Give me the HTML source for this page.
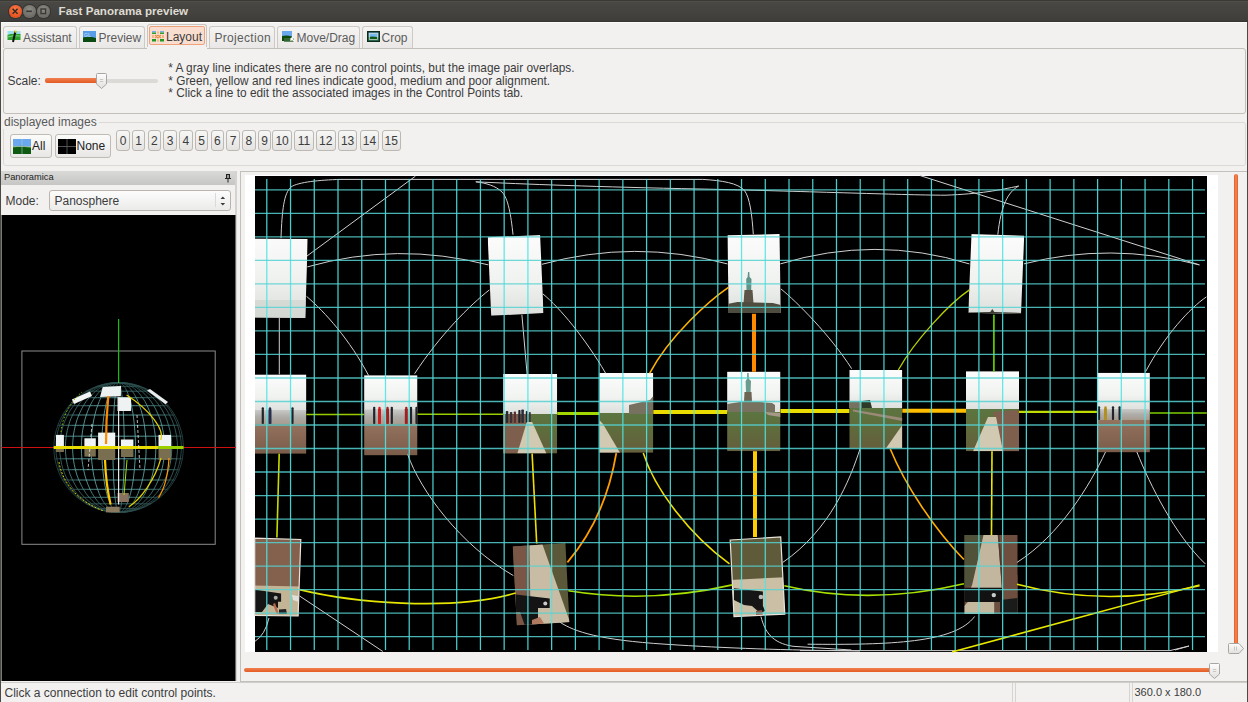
<!DOCTYPE html>
<html><head><meta charset="utf-8">
<style>
*{margin:0;padding:0;box-sizing:border-box}
html,body{width:1248px;height:702px;overflow:hidden;background:#f2f1f0;font-family:"Liberation Sans",sans-serif;font-size:12px;color:#3c3c3c}
.a{position:absolute}
#title{left:0;top:0;width:1248px;height:22px;background:linear-gradient(#55534e 0,#4a4844 6%,#3f3e3a 92%,#32312d 100%);border-top:1px solid #3a3934}
#title .t{left:58.6px;top:2.7px;font-weight:bold;font-size:11.6px;color:#dfdbd2;letter-spacing:0}
.wb{width:12.5px;height:12.5px;border-radius:50%;top:4px}
.tab{top:25.5px;height:22px;border:1px solid #cdcac6;border-bottom:none;border-radius:3px 3px 0 0;background:linear-gradient(#f5f4f3,#e9e8e6)}
.tab span{position:absolute;top:4px;color:#5c5c5c;white-space:nowrap}
.grp{border:1px solid #c9c6c1;border-radius:3px}
.btn{border:1px solid #bfbbb5;border-radius:3px;background:linear-gradient(#fbfbfa,#e8e7e5);}
.nb{top:129.5px;height:21px;border:1px solid #bcb8b2;border-radius:3px;background:linear-gradient(#f7f7f6,#e4e3e1);text-align:center;line-height:19px;padding-top:1.5px;color:#3c3c3c;font-size:12px}
.txt{white-space:nowrap}
</style></head><body>
<!-- window border -->
<div class="a" style="left:0;top:0;width:1px;height:702px;background:#4a4944"></div>
<div class="a" style="left:1247px;top:0;width:1px;height:702px;background:#4a4944"></div>
<div id="title" class="a">
  <div class="a wb" style="left:9px;background:radial-gradient(circle at 50% 35%,#fb7a4a,#e5531f 70%);box-shadow:0 0 0 1px #2e3436"></div>
  <div class="a wb" style="left:23px;background:radial-gradient(circle at 50% 35%,#8d8b85,#6d6b66 70%);box-shadow:0 0 0 1px #34332f"></div>
  <div class="a wb" style="left:37px;background:radial-gradient(circle at 50% 35%,#8d8b85,#6d6b66 70%);box-shadow:0 0 0 1px #34332f"></div>
  <svg class="a" style="left:0;top:-1px" width="60" height="22">
    <path d="M12.6 8.8 L17.6 13.8 M17.6 8.8 L12.6 13.8" stroke="#3b2a22" stroke-width="1.6"/>
    <path d="M26.3 11.3 H31.9" stroke="#3a3935" stroke-width="1.6"/>
    <rect x="41" y="9" width="4.6" height="4.6" fill="none" stroke="#3a3935" stroke-width="1.4"/>
  </svg>
  <div class="a t txt">Fast Panorama preview</div>
</div>
<div class="a" style="left:1px;top:22px;width:1246px;height:1px;background:#fbfbfa"></div>

<!-- tabs -->
<div class="a tab" style="left:3px;width:74px"><span style="left:19px">Assistant</span></div>
<div class="a tab" style="left:78.5px;width:66px"><span style="left:19px">Preview</span></div>
<div class="a tab" style="left:146.5px;top:23.5px;height:25px;width:60.5px;background:#f2f1f0;border-color:#c9c6c1"></div>
<div class="a" style="left:149px;top:26.3px;width:55.5px;height:19.2px;border:1px solid #f0a27c;border-radius:2px;background:#f9ded0"></div>
<div class="a txt" style="left:166px;top:29.5px;color:#3c3c3c">Layout</div>
<div class="a tab" style="left:208.5px;width:66px"><span style="left:5px;letter-spacing:0.3px">Projection</span></div>
<div class="a tab" style="left:276.5px;width:83px"><span style="left:19px">Move/Drag</span></div>
<div class="a tab" style="left:361.5px;width:51px"><span style="left:19px">Crop</span></div>

<!-- options group -->
<div class="a grp" style="left:2.5px;top:47.5px;width:1243px;height:66px;border-color:#c3c0bb"></div>
<div class="a" style="left:146.5px;top:47px;width:60.5px;height:2px;background:#f2f1f0"></div>
<div class="a txt" style="left:7.5px;top:74px">Scale:</div>
<div class="a txt" style="left:168.3px;top:62px;line-height:12.7px;font-size:11.85px;color:#3c3c3c">* A gray line indicates there are no control points, but the image pair overlaps.<br>* Green, yellow and red lines indicate good, medium and poor alignment.<br>* Click a line to edit the associated images in the Control Points tab.</div>

<!-- displayed images group -->
<div class="a grp" style="left:2.5px;top:122px;width:1243px;height:43.5px;border-color:#dcd9d5"></div>
<div class="a txt" style="left:2px;top:115px;padding:0 2px;background:#f2f1f0;color:#5a5a5a">displayed images</div>
<div class="a btn" style="left:9.5px;top:133.5px;width:42px;height:24.5px"></div>
<div class="a txt" style="left:32px;top:138.5px;color:#222">All</div>
<div class="a btn" style="left:54.5px;top:133.5px;width:56px;height:24.5px"></div>
<div class="a txt" style="left:76.5px;top:138.5px;color:#222">None</div>

<div class="a nb" style="left:116.2px;width:13.6px">0</div>
<div class="a nb" style="left:131.9px;width:13.6px">1</div>
<div class="a nb" style="left:147.6px;width:13.6px">2</div>
<div class="a nb" style="left:163.4px;width:13.6px">3</div>
<div class="a nb" style="left:179.1px;width:13.6px">4</div>
<div class="a nb" style="left:194.8px;width:13.6px">5</div>
<div class="a nb" style="left:210.5px;width:13.6px">6</div>
<div class="a nb" style="left:226.2px;width:13.6px">7</div>
<div class="a nb" style="left:242.0px;width:13.6px">8</div>
<div class="a nb" style="left:257.7px;width:13.6px">9</div>
<div class="a nb" style="left:272.3px;width:19.6px">10</div>
<div class="a nb" style="left:294.1px;width:19.6px">11</div>
<div class="a nb" style="left:316.0px;width:19.6px">12</div>
<div class="a nb" style="left:337.8px;width:19.6px">13</div>
<div class="a nb" style="left:359.7px;width:19.6px">14</div>
<div class="a nb" style="left:381.5px;width:19.6px">15</div>
<!-- icons -->
<svg class="a" style="left:7px;top:30px" width="14" height="13" viewBox="0 0 14 13">
 <rect x="0.5" y="1" width="13" height="4" fill="#9fe0f0"/><path d="M0.5 5 Q4 3 13.5 4 V10 H0.5Z" fill="#2ca02c"/><path d="M0.5 7 Q6 5 13.5 6" stroke="#7fd87f" stroke-width="1" fill="none"/>
 <path d="M8.5 1 L6 12" stroke="#111" stroke-width="2"/><circle cx="8.6" cy="1.6" r="1.2" fill="#e8d020"/>
</svg>
<svg class="a" style="left:83px;top:31px" width="13" height="11" viewBox="0 0 13 11">
 <rect width="13" height="11" fill="#5a9de8"/><path d="M0 6.5 Q6 5 13 7 V11 H0Z" fill="#0b4a12"/><text x="1" y="5.5" font-size="5" fill="#cfe3ff" font-family="Liberation Sans">GL</text>
</svg>
<svg class="a" style="left:151.5px;top:30.5px" width="12" height="11" viewBox="0 0 12 11">
 <rect x="0" y="0" width="4" height="1.5" fill="#7ab0e8"/><rect x="0" y="1.5" width="4" height="1.5" fill="#2ea02e"/>
 <rect x="8" y="0" width="4" height="1.5" fill="#7ab0e8"/><rect x="8" y="1.5" width="4" height="1.5" fill="#2ea02e"/>
 <rect x="0" y="8" width="4" height="2.5" fill="#1f9a1f"/><rect x="8" y="8" width="4" height="2.5" fill="#1f9a1f"/>
 <path d="M1 4 V7 M3 4 L6 7 M6 4 L3 7 M9 4 L6 7 M6 4 L9 7 M11 4 V7" stroke="#e89048" stroke-width="1.1"/>
 <path d="M6 0.5 V2.5 M6 8.5 V10.5" stroke="#e89048" stroke-width="1"/>
</svg>
<svg class="a" style="left:281.5px;top:31px" width="13" height="12" viewBox="0 0 13 12">
 <rect x="0" y="0" width="10" height="6" fill="#6aa8f0"/><path d="M0 5 Q5 4 10 5.5 V10 H0Z" fill="#0c4a10"/>
 <rect x="2" y="7" width="10" height="4" fill="#3c6e3c" opacity="0.8"/><path d="M9 7 L12.5 10.5 M9 7 V10 M9 7 H12" stroke="#fff" stroke-width="1.2"/>
</svg>
<svg class="a" style="left:366.5px;top:31px" width="13" height="11" viewBox="0 0 13 11">
 <rect width="13" height="11" fill="#0d2a1a"/><rect x="1.5" y="1.5" width="10" height="8" fill="#78b8f0"/><path d="M1.5 6 Q6 5 11.5 6.5 V9.5 H1.5Z" fill="#0f5a18"/>
 <rect x="2.5" y="2.5" width="8" height="6" fill="none" stroke="#c8d8d0" stroke-width="0.8"/>
</svg>
<svg class="a" style="left:13px;top:138.5px" width="18" height="15" viewBox="0 0 18 15">
 <rect width="18" height="8" fill="#6aa8f0"/><rect y="8" width="18" height="7" fill="#0e5a12"/><path d="M0 8 Q9 6 18 8.5" stroke="#5c9a40" fill="none"/>
 <path d="M9 0 V15 M0 7.5 H18" stroke="#b8cce0" stroke-width="0.8" opacity="0.7"/>
</svg>
<svg class="a" style="left:57.5px;top:138.5px" width="18" height="15" viewBox="0 0 18 15">
 <rect width="18" height="15" fill="#000"/><path d="M9 0 V15 M0 7.5 H18" stroke="#666" stroke-width="0.8"/>
</svg>

<!-- panoramica panel -->
<div class="a" style="left:1px;top:171px;width:235px;height:13.5px;background:linear-gradient(#d9d9d8,#c6c6c5)"></div>
<div class="a txt" style="left:4px;top:171.5px;font-size:9.3px;color:#1e1e1e">Panoramica</div>
<div class="a txt" style="left:5.5px;top:193.5px">Mode:</div>
<div class="a" style="left:48.5px;top:190px;width:182px;height:20.5px;border:1px solid #b9b4ad;border-radius:3px;background:linear-gradient(#fcfcfc,#ebebea)"></div>
<div class="a" style="left:214.5px;top:193px;width:1px;height:14px;background:#dcdad6"></div>
<div class="a txt" style="left:54.5px;top:193.5px;color:#3c3c3c">Panosphere</div>
<div class="a" style="left:235px;top:171px;width:1.5px;height:510px;background:#d4d3d1"></div>

<!-- right pane border -->
<div class="a" style="left:240px;top:171px;width:1007px;height:511px;border:1px solid #c2c0bc;border-right:none"></div>
<div class="a" style="left:244.7px;top:175.3px;width:973.3px;height:476.7px;background:#fff"></div>

<!-- sliders -->
<div class="a" style="left:45px;top:78.5px;width:113px;height:4px;border-radius:2px;background:#dcdad6"></div>
<div class="a" style="left:45px;top:78.3px;width:57px;height:4.4px;border-radius:2px;background:linear-gradient(#f08050,#e45a22)"></div>
<div class="a" style="left:243.5px;top:668.4px;width:972px;height:4px;border-radius:2px;background:linear-gradient(#f08050,#e45a22)"></div>
<div class="a" style="left:1234px;top:174px;width:4px;height:475px;border-radius:2px;background:linear-gradient(90deg,#e45a22,#f48a5a,#e45a22)"></div>


<!-- slider thumbs -->
<svg class="a" style="left:95px;top:72px" width="13" height="18" viewBox="0 0 13 18">
 <defs><linearGradient id="th" x1="0" y1="0" x2="0" y2="1"><stop offset="0" stop-color="#fdfdfd"/><stop offset="1" stop-color="#e2e0dd"/></linearGradient></defs>
 <path d="M2.5,1.5 H10.5 Q11.5,1.5 11.5,2.5 V12 L6.5,16.5 L1.5,12 V2.5 Q1.5,1.5 2.5,1.5Z" fill="url(#th)" stroke="#a9a6a1" stroke-width="1"/>
 <path d="M4.8,7.5 H8.2 M4.8,9.5 H8.2" stroke="#c0bdb8" stroke-width="0.8"/>
</svg>
<svg class="a" style="left:1208px;top:662px" width="13" height="18" viewBox="0 0 13 18">
 <path d="M2.5,1.5 H10.5 Q11.5,1.5 11.5,2.5 V12 L6.5,16.5 L1.5,12 V2.5 Q1.5,1.5 2.5,1.5Z" fill="url(#th)" stroke="#a9a6a1" stroke-width="1"/>
 <path d="M4.8,7.5 H8.2 M4.8,9.5 H8.2" stroke="#c0bdb8" stroke-width="0.8"/>
</svg>
<svg class="a" style="left:1227px;top:642px" width="19" height="13" viewBox="0 0 19 13">
 <defs><linearGradient id="th2" x1="0" y1="0" x2="0" y2="1"><stop offset="0" stop-color="#fdfdfd"/><stop offset="1" stop-color="#e2e0dd"/></linearGradient></defs>
 <path d="M2.5,1.5 H12 L16.5,6.5 L12,11.5 H2.5 Q1.5,11.5 1.5,10.5 V2.5 Q1.5,1.5 2.5,1.5Z" fill="url(#th2)" stroke="#a9a6a1" stroke-width="1"/>
 <path d="M7.5,4.5 V8.5 M9.5,4.5 V8.5" stroke="#c0bdb8" stroke-width="0.8"/>
</svg>
<!-- combo arrows, pin -->
<svg class="a" style="left:218px;top:194px" width="10" height="14" viewBox="0 0 10 14">
 <path d="M2.5,5 L4.8,2.5 L7.1,5Z M2.5,9 L4.8,11.5 L7.1,9Z" fill="#3c3c3c"/>
</svg>
<svg class="a" style="left:224px;top:173px" width="8" height="10" viewBox="0 0 8 10">
 <path d="M2,1 H6 V5 H7 V6 H4.5 V9.5 H3.5 V6 H1 V5 H2Z" fill="#222"/><rect x="3" y="2" width="2" height="3" fill="#999"/>
</svg>

<!-- statusbar -->
<div class="a" style="left:1px;top:682px;width:1246px;height:1px;background:#cfcdc9"></div>
<div class="a txt" style="left:4.5px;top:686px;color:#3c3c3c">Click a connection to edit control points.</div>
<div class="a" style="left:1012px;top:683px;width:1px;height:19px;background:#d6d4d0"></div>
<div class="a" style="left:1015px;top:683px;width:1px;height:19px;background:#d6d4d0"></div>
<div class="a" style="left:1129px;top:683px;width:1px;height:19px;background:#d6d4d0"></div>
<div class="a" style="left:1132px;top:683px;width:1px;height:19px;background:#d6d4d0"></div>
<div class="a txt" style="left:1134.5px;top:686px;font-size:11px;color:#3c3c3c">360.0 x 180.0</div>

<svg class="a" style="left:0;top:0" width="1248" height="702" id="cv">
<defs>
<linearGradient id="sky" x1="0" y1="0" x2="0" y2="1"><stop offset="0" stop-color="#f9faf9"/><stop offset="0.5" stop-color="#f0f2f0"/><stop offset="1" stop-color="#dadddA"/></linearGradient>
<linearGradient id="sky2" x1="0" y1="0" x2="0" y2="1"><stop offset="0" stop-color="#fbfcfb"/><stop offset="0.6" stop-color="#f0f2f0"/><stop offset="1" stop-color="#dcdfdb"/></linearGradient>
<linearGradient id="skyP" x1="0" y1="0" x2="0" y2="1"><stop offset="0" stop-color="#fbfcfb"/><stop offset="0.6" stop-color="#f1f3f1"/><stop offset="1" stop-color="#dde0dd"/></linearGradient>
<linearGradient id="rail" x1="0" y1="0" x2="0" y2="1"><stop offset="0" stop-color="#c8cac8"/><stop offset="0.5" stop-color="#aeaca8"/><stop offset="1" stop-color="#a89c90"/></linearGradient>
<linearGradient id="ground" x1="0" y1="0" x2="0" y2="1"><stop offset="0" stop-color="#93725e"/><stop offset="1" stop-color="#7a5c4a"/></linearGradient>
<linearGradient id="grassG" x1="0" y1="0" x2="0" y2="1"><stop offset="0" stop-color="#5c7540"/><stop offset="0.35" stop-color="#5e6e3c"/><stop offset="1" stop-color="#655e3c"/></linearGradient>
</defs>
<rect x="1.5" y="215" width="234" height="466" fill="#000"/>
<rect x="255" y="176" width="952" height="476" fill="#000"/>
<clipPath id="cA"><polygon points="255,238.4 307.7,239 305.3,318 255,317.5"/></clipPath>
<g clip-path="url(#cA)">
<rect x="255.0" y="238.4" width="52.7" height="79.6" fill="url(#sky)" />
<rect x="255.0" y="300.0" width="52.7" height="18.0" fill="#d2d6d0"  opacity="0.7"/>
</g>
<clipPath id="cB"><polygon points="487.7,237.2 540.1,235.1 543.5,313.1 491.2,315.8"/></clipPath>
<g clip-path="url(#cB)">
<rect x="487.7" y="235.1" width="55.8" height="80.7" fill="url(#sky2)" />
</g>
<clipPath id="cC"><polygon points="727.4,235.3 779.5,234 780.8,313.1 728.7,313.1"/></clipPath>
<g clip-path="url(#cC)">
<rect x="727.4" y="234.0" width="53.4" height="79.1" fill="url(#sky2)" />
<path d="M748,272 L749.3,272 L749.6,277 L751.5,279 L751.2,290 L746.5,290 L746.2,279 L747.6,277Z" fill="#5f9488"/>
<path d="M744.5,290 H752.5 L753.5,303.8 H743.5Z" fill="#5c5446"/>
<path d="M727.4,304 L737.4,302 L772.8,303 L780.8,305 V313.1 H727.4Z" fill="#4e4c3e"/>
</g>
<clipPath id="cD"><polygon points="971.5,234.1 1024.2,235.8 1021,314 968.3,312.8"/></clipPath>
<g clip-path="url(#cD)">
<rect x="968.3" y="234.1" width="55.9" height="79.9" fill="url(#sky2)" />
<path d="M968.3,312.5 L990.3,312 L992.3,309 L994.3,312 L1024.2,313 V314 H968.3Z" fill="#3a3a30"/>
</g>
<clipPath id="cE"><polygon points="255,374.4 306.4,374.4 306.4,453.8 255,453.8"/></clipPath>
<g clip-path="url(#cE)">
<rect x="255.0" y="374.4" width="51.4" height="36.6" fill="url(#skyP)" />
<rect x="255.0" y="410.0" width="51.4" height="14.0" fill="url(#rail)" />
<rect x="255.0" y="424.0" width="51.4" height="29.8" fill="url(#ground)" />
<rect x="261.7" y="409" width="2.2" height="15" fill="#22242a" rx="0.8"/>
<circle cx="262.8" cy="408.5" r="1.2" fill="#22242a"/>
<rect x="268.5" y="409" width="3" height="15" fill="#283050" rx="0.8"/>
<circle cx="270.0" cy="408.5" r="1.2" fill="#283050"/>
<rect x="291.4" y="409" width="2.2" height="15" fill="#22242a" rx="0.8"/>
<circle cx="292.5" cy="408.5" r="1.2" fill="#22242a"/>
</g>
<clipPath id="cF"><polygon points="364.1,375.2 417.5,375.2 417.5,455.4 364.1,455.4"/></clipPath>
<g clip-path="url(#cF)">
<rect x="364.1" y="375.2" width="53.4" height="35.3" fill="url(#skyP)" />
<rect x="364.1" y="409.5" width="53.4" height="14.5" fill="url(#rail)" />
<rect x="364.1" y="424.0" width="53.4" height="31.4" fill="url(#ground)" />
<rect x="373.1" y="408.5" width="2.2" height="15.5" fill="#22242a" rx="0.8"/>
<circle cx="374.2" cy="408.0" r="1.2" fill="#22242a"/>
<rect x="378.0" y="408.5" width="3" height="15.5" fill="#c82020" rx="0.8"/>
<circle cx="379.5" cy="408.0" r="1.2" fill="#c82020"/>
<rect x="386.0" y="408.5" width="3" height="15.5" fill="#a02020" rx="0.8"/>
<circle cx="387.5" cy="408.0" r="1.2" fill="#a02020"/>
<rect x="390.7" y="408.5" width="2.2" height="15.5" fill="#22242a" rx="0.8"/>
<circle cx="391.8" cy="408.0" r="1.2" fill="#22242a"/>
<rect x="404.8" y="408.5" width="3" height="15.5" fill="#a02020" rx="0.8"/>
<circle cx="406.3" cy="408.0" r="1.2" fill="#a02020"/>
<rect x="409.9" y="408.5" width="2.2" height="15.5" fill="#22242a" rx="0.8"/>
<circle cx="411.0" cy="408.0" r="1.2" fill="#22242a"/>
<rect x="415.4" y="408.5" width="2.2" height="15.5" fill="#22242a" rx="0.8"/>
<circle cx="416.5" cy="408.0" r="1.2" fill="#22242a"/>
</g>
<clipPath id="cG"><polygon points="503.1,374 557.2,374 557.2,453.6 503.1,453.6"/></clipPath>
<g clip-path="url(#cG)">
<rect x="503.1" y="374.0" width="54.1" height="40.0" fill="url(#skyP)" />
<rect x="503.1" y="414.0" width="54.1" height="39.6" fill="url(#grassG)" />
<path d="M503,414 L532,414 L526.8,421.9 L517.3,453.6 L503,453.6Z" fill="#7e5e4c"/>
<rect x="505.8" y="411" width="2.5" height="12" fill="#2a2a2e" rx="0.8"/>
<rect x="509.8" y="412" width="2.5" height="11" fill="#3a3036" rx="0.8"/>
<rect x="513.8" y="411.5" width="2.2" height="11.5" fill="#5a3030" rx="0.8"/>
<rect x="518.3" y="410" width="2.2" height="13" fill="#22242a" rx="0.8"/>
<rect x="521.3" y="409.5" width="2.6" height="13.5" fill="#2a2e3a" rx="0.8"/>
<rect x="525.8" y="411" width="2" height="12" fill="#22242a" rx="0.8"/>
<rect x="528.8" y="412" width="2" height="11" fill="#3a3a3a" rx="0.8"/>
<path d="M526.8,421.9 L532.2,421.9 L546.4,453.6 L517.3,453.6Z" fill="#d2c9b2"/>
</g>
<clipPath id="cH"><polygon points="599.3,373 653.3,373 653.3,452.8 599.3,452.8"/></clipPath>
<g clip-path="url(#cH)">
<rect x="599.3" y="373.0" width="54.0" height="40.0" fill="url(#skyP)" />
<rect x="599.3" y="413.0" width="54.0" height="39.8" fill="url(#grassG)" />
<path d="M629,405 L650,400 L653.3,396 V414 H629Z" fill="#76725f"/>
<path d="M599.3,420 L603,424 L620,452.8 L599.3,452.8Z" fill="#d2c9b2"/>
</g>
<clipPath id="cI"><polygon points="727.1,371.6 780.5,371.6 780.5,451.2 727.1,451.2"/></clipPath>
<g clip-path="url(#cI)">
<rect x="727.1" y="371.6" width="53.4" height="40.4" fill="url(#skyP)" />
<rect x="727.1" y="412.0" width="53.4" height="39.2" fill="url(#grassG)" />
<path d="M727.1,404 L740,402 L760,402 L772,403 L775,405 V412 H727.1Z" fill="#76725f"/>
<path d="M747.2,373 L748.6,373 L749,379 L751,381 L750.6,392 L746,392 L745.6,381 L747,379Z" fill="#6a9c90"/>
<path d="M744.5,392 H751.5 L752,402 H744Z" fill="#6c6454"/>
<path d="M765,412 L780.5,413 V417 L768,415Z" fill="#a89888"/>
</g>
<clipPath id="cJ"><polygon points="849.3,370 902.3,370 902.3,448.2 849.3,448.2"/></clipPath>
<g clip-path="url(#cJ)">
<rect x="849.3" y="370.0" width="53.0" height="38.0" fill="url(#skyP)" />
<rect x="849.3" y="408.0" width="53.0" height="40.2" fill="url(#grassG)" />
<path d="M849.3,401 L862,401 L864,408 H849.3Z" fill="#76725f"/>
<path d="M862,401 L870,400 L872,408 H862Z" fill="#2e3a28"/>
<path d="M853,409.5 L902.3,418 V421 L853,411.5Z" fill="#9c8a78"/>
<path d="M902.3,425 L902.3,448.2 L886,448.2Z" fill="#d2c9b2"/>
</g>
<clipPath id="cK"><polygon points="966,371.2 1019,371.2 1019,451.3 966,451.3"/></clipPath>
<g clip-path="url(#cK)">
<rect x="966.0" y="371.2" width="53.0" height="37.8" fill="url(#skyP)" />
<rect x="966.0" y="409.0" width="53.0" height="42.3" fill="url(#grassG)" />
<path d="M993,412 L1019,410 L1019,451.3 L1003,451.3Z" fill="#7e5e4c"/>
<path d="M988,417 L996,417 L1003,451.3 L973,451.3Z" fill="#d2c9b2"/>
</g>
<clipPath id="cL"><polygon points="1096.9,372.7 1149.9,372.7 1149.9,452.4 1096.9,452.4"/></clipPath>
<g clip-path="url(#cL)">
<rect x="1096.9" y="372.7" width="53.0" height="37.3" fill="url(#skyP)" />
<rect x="1096.9" y="409.0" width="53.0" height="11.0" fill="url(#rail)" />
<rect x="1096.9" y="420.0" width="53.0" height="32.4" fill="url(#ground)" />
<rect x="1097.9" y="408" width="2.2" height="12" fill="#22242a" rx="0.8"/>
<circle cx="1099.0" cy="407.5" r="1.2" fill="#22242a"/>
<rect x="1104.0" y="408" width="3" height="12" fill="#b09020" rx="0.8"/>
<circle cx="1105.5" cy="407.5" r="1.2" fill="#b09020"/>
<rect x="1111.9" y="408" width="2.2" height="12" fill="#22242a" rx="0.8"/>
<circle cx="1113.0" cy="407.5" r="1.2" fill="#22242a"/>
<rect x="1118.5" y="408" width="2.2" height="12" fill="#22242a" rx="0.8"/>
<circle cx="1119.6" cy="407.5" r="1.2" fill="#22242a"/>
</g>
<clipPath id="cM"><polygon points="254.7,538.1 300.8,539.5 298.1,616 254.7,615.3"/></clipPath>
<g clip-path="url(#cM)">
<rect x="254.7" y="538.1" width="46.1" height="77.9" fill="#84614d" />
<path d="M254,585.5 L302,586.5 V617 H254Z" fill="#c4b496"/>
<path d="M254,589.6 L281.1,593.6 V601.7 L278,601.7 L278,608 L268,604 L262,612 L254,612Z" fill="#151515"/>
<circle cx="275.7" cy="597.7" r="2" fill="#a8aca8"/>
<path d="M273,604 L275,603 L279,614 L276.5,614Z" fill="#b86a48"/>
<path d="M279,609.5 L286,609 L287,614 L279,614Z" fill="#222"/>
<path d="M292,595 L298,596 L298,601.7 L293,600Z" fill="#e0e0dc"/>
</g>
<polygon points="254.7,538.1 300.8,539.5 298.1,616 254.7,615.3" fill="none" stroke="#e8e4dc" stroke-width="1.2"/>
<clipPath id="cN"><polygon points="512.8,546.4 565.4,542.9 569.4,622.3 516.9,625.2"/></clipPath>
<g clip-path="url(#cN)">
<rect x="512.8" y="542.9" width="56.6" height="82.3" fill="#5a5838" />
<path d="M512,540 L529.4,540 L530.7,626 L512,626Z" fill="#7a5646"/>
<path d="M529.4,540 L540.9,540 L570,622 L530.7,626Z" fill="#c8bca4"/>
<path d="M515.8,594.6 L549.7,598.6 V608 L538,608 L538,626 L525,626 L520,612 L515.8,612Z" fill="#141414"/>
<circle cx="545.3" cy="603.4" r="2" fill="#c8ccc8"/>
<path d="M532,620 L540,617 L545.6,626 H532Z" fill="#b07a60"/>
</g>
<clipPath id="cO"><polygon points="730.2,540 780.7,537 784.8,614.1 734,616.5"/></clipPath>
<g clip-path="url(#cO)">
<rect x="730.2" y="537.0" width="54.6" height="79.5" fill="#5f5b3a" />
<path d="M728,580 L790,577 V620 H728Z" fill="#cbbfa6"/>
<path d="M734,588.2 L762.9,591.6 V605.8 L765,611 L760,613 L752,606 L744,605 L734,600Z" fill="#151515"/>
<circle cx="760.9" cy="597" r="2.3" fill="#b8bcb8"/>
<path d="M756,611 L762,610 L763,616 H756Z" fill="#8a5040"/>
</g>
<polygon points="730.2,540 780.7,537 784.8,614.1 734,616.5" fill="none" stroke="#e8e4dc" stroke-width="1.2"/>
<clipPath id="cP"><polygon points="964.3,535 1017.7,535 1017.7,614.1 964.3,614.1"/></clipPath>
<g clip-path="url(#cP)">
<rect x="964.3" y="535.0" width="53.4" height="79.1" fill="#6e4e3e" />
<path d="M964.3,535 L983.5,535 L972.1,585 L964.3,587Z" fill="#50523a"/>
<path d="M983.5,535 L997.8,535 L1002,590 L970,590 L972.1,585Z" fill="#c2b69e"/>
<path d="M997.8,535 L999.5,535 L1003.5,590 H1002Z" fill="#4a3a30"/>
<rect x="964.3" y="587.7" width="38.0" height="14.3" fill="#121212" />
<rect x="1002.0" y="575.0" width="15.7" height="39.1" fill="#6e4e3e" />
<path d="M1000,600 L1017.7,598 V614.1 H1000Z" fill="#1a1c1c"/>
<path d="M967.8,602 L994.2,602 V614.1 H964.3 V606Z" fill="#c4b89e"/>
<circle cx="993.8" cy="595.1" r="2.2" fill="#c8ccc8"/>
</g>
<rect x="21.9" y="351" width="193.3" height="193.3" fill="none" stroke="#8c8c8c" stroke-width="1"/>
<path d="M1.5,447.5 H236" stroke="#d01010" stroke-width="1.2"/>
<path d="M118.6,319 V383" stroke="#10c010" stroke-width="1.2"/>
<radialGradient id="sgr" cx="118.6" cy="447.5" r="66" gradientUnits="userSpaceOnUse"><stop offset="0" stop-color="#fff"/><stop offset="0.75" stop-color="#ddd"/><stop offset="1" stop-color="#555"/></radialGradient><mask id="smask" maskUnits="userSpaceOnUse" x="40" y="370" width="160" height="160"><rect x="40" y="370" width="160" height="160" fill="url(#sgr)"/></mask>
<g mask="url(#smask)">
<g fill="none" stroke="rgb(110,200,200)" stroke-opacity="0" stroke-width="1">
<path d="M129.8,511.5 L129.9,511.5 L129.8,511.5 L129.7,511.5 L129.5,511.5 L129.2,511.5 L128.8,511.5 L128.4,511.5 L127.8,511.5 L127.2,511.5 L126.6,511.5 L125.9,511.5 L125.1,511.5 L124.2,511.5 L123.4,511.5 L122.5,511.5 L121.5,511.5 L120.6,511.5 L119.6,511.5 L118.6,511.5 L117.6,511.5 L116.6,511.5 L115.7,511.5 L114.7,511.5 L113.8,511.5 L113.0,511.5 L112.1,511.5 L111.3,511.5 L110.6,511.5 L110.0,511.5 L109.4,511.5 L108.8,511.5 L108.4,511.5 L108.0,511.5 L107.7,511.5 L107.5,511.5 L107.4,511.5 L107.3,511.5"/>
<path d="M140.7,508.6 L140.8,508.6 L140.7,508.6 L140.5,508.6 L140.1,508.6 L139.5,508.6 L138.7,508.6 L137.9,508.6 L136.8,508.6 L135.6,508.6 L134.3,508.6 L132.9,508.6 L131.4,508.6 L129.7,508.6 L128.0,508.6 L126.2,508.6 L124.4,508.6 L122.5,508.6 L120.5,508.6 L118.6,508.6 L116.7,508.6 L114.7,508.6 L112.8,508.6 L111.0,508.6 L109.2,508.6 L107.5,508.6 L105.8,508.6 L104.3,508.6 L102.9,508.6 L101.6,508.6 L100.4,508.6 L99.3,508.6 L98.5,508.6 L97.7,508.6 L97.1,508.6 L96.7,508.6 L96.5,508.6 L96.4,508.6"/>
<path d="M151.0,503.8 L151.1,503.8 L151.0,503.8 L150.6,503.8 L150.0,503.8 L149.1,503.8 L148.1,503.8 L146.7,503.8 L145.2,503.8 L143.5,503.8 L141.6,503.8 L139.5,503.8 L137.2,503.8 L134.8,503.8 L132.3,503.8 L129.7,503.8 L127.0,503.8 L124.2,503.8 L121.4,503.8 L118.6,503.8 L115.8,503.8 L113.0,503.8 L110.2,503.8 L107.5,503.8 L104.9,503.8 L102.3,503.8 L100.0,503.8 L97.7,503.8 L95.6,503.8 L93.7,503.8 L92.0,503.8 L90.5,503.8 L89.1,503.8 L88.1,503.8 L87.2,503.8 L86.6,503.8 L86.2,503.8 L86.1,503.8"/>
<path d="M160.2,497.3 L160.4,497.3 L160.2,497.3 L159.7,497.3 L159.0,497.3 L157.9,497.3 L156.5,497.3 L154.8,497.3 L152.8,497.3 L150.6,497.3 L148.1,497.3 L145.5,497.3 L142.6,497.3 L139.5,497.3 L136.3,497.3 L132.9,497.3 L129.4,497.3 L125.9,497.3 L122.2,497.3 L118.6,497.3 L115.0,497.3 L111.3,497.3 L107.8,497.3 L104.3,497.3 L100.9,497.3 L97.7,497.3 L94.6,497.3 L91.7,497.3 L89.1,497.3 L86.6,497.3 L84.4,497.3 L82.4,497.3 L80.7,497.3 L79.3,497.3 L78.2,497.3 L77.5,497.3 L77.0,497.3 L76.8,497.3"/>
<path d="M168.2,489.3 L168.4,489.3 L168.2,489.3 L167.6,489.3 L166.7,489.3 L165.4,489.3 L163.7,489.3 L161.7,489.3 L159.4,489.3 L156.7,489.3 L153.8,489.3 L150.6,489.3 L147.2,489.3 L143.5,489.3 L139.6,489.3 L135.6,489.3 L131.5,489.3 L127.2,489.3 L122.9,489.3 L118.6,489.3 L114.3,489.3 L110.0,489.3 L105.7,489.3 L101.6,489.3 L97.6,489.3 L93.7,489.3 L90.0,489.3 L86.6,489.3 L83.4,489.3 L80.5,489.3 L77.8,489.3 L75.5,489.3 L73.5,489.3 L71.8,489.3 L70.5,489.3 L69.6,489.3 L69.0,489.3 L68.8,489.3"/>
<path d="M174.7,480.0 L174.9,480.0 L174.7,480.0 L174.0,480.0 L173.0,480.0 L171.5,480.0 L169.6,480.0 L167.3,480.0 L164.7,480.0 L161.7,480.0 L158.4,480.0 L154.8,480.0 L150.9,480.0 L146.7,480.0 L142.4,480.0 L137.9,480.0 L133.2,480.0 L128.4,480.0 L123.5,480.0 L118.6,480.0 L113.7,480.0 L108.8,480.0 L104.0,480.0 L99.3,480.0 L94.8,480.0 L90.5,480.0 L86.3,480.0 L82.4,480.0 L78.8,480.0 L75.5,480.0 L72.5,480.0 L69.9,480.0 L67.6,480.0 L65.7,480.0 L64.2,480.0 L63.2,480.0 L62.5,480.0 L62.3,480.0"/>
<path d="M179.4,469.7 L179.7,469.7 L179.4,469.7 L178.8,469.7 L177.6,469.7 L176.0,469.7 L174.0,469.7 L171.5,469.7 L168.6,469.7 L165.4,469.7 L161.8,469.7 L157.9,469.7 L153.6,469.7 L149.1,469.7 L144.4,469.7 L139.5,469.7 L134.4,469.7 L129.2,469.7 L123.9,469.7 L118.6,469.7 L113.3,469.7 L108.0,469.7 L102.8,469.7 L97.7,469.7 L92.8,469.7 L88.1,469.7 L83.6,469.7 L79.3,469.7 L75.4,469.7 L71.8,469.7 L68.6,469.7 L65.7,469.7 L63.2,469.7 L61.2,469.7 L59.6,469.7 L58.4,469.7 L57.8,469.7 L57.5,469.7"/>
<path d="M182.4,458.8 L182.6,458.8 L182.4,458.8 L181.6,458.8 L180.4,458.8 L178.8,458.8 L176.6,458.8 L174.0,458.8 L171.0,458.8 L167.6,458.8 L163.9,458.8 L159.7,458.8 L155.3,458.8 L150.6,458.8 L145.7,458.8 L140.5,458.8 L135.2,458.8 L129.7,458.8 L124.2,458.8 L118.6,458.8 L113.0,458.8 L107.5,458.8 L102.0,458.8 L96.7,458.8 L91.5,458.8 L86.6,458.8 L81.9,458.8 L77.5,458.8 L73.3,458.8 L69.6,458.8 L66.2,458.8 L63.2,458.8 L60.6,458.8 L58.4,458.8 L56.8,458.8 L55.6,458.8 L54.8,458.8 L54.6,458.8"/>
<path d="M183.6,447.5 L183.4,447.5 L182.6,447.5 L181.4,447.5 L179.7,447.5 L177.5,447.5 L174.9,447.5 L171.8,447.5 L168.4,447.5 L164.6,447.5 L160.4,447.5 L155.9,447.5 L151.1,447.5 L146.1,447.5 L140.8,447.5 L135.4,447.5 L129.9,447.5 L124.3,447.5 L118.6,447.5 L112.9,447.5 L107.3,447.5 L101.8,447.5 L96.4,447.5 L91.1,447.5 L86.1,447.5 L81.3,447.5 L76.8,447.5 L72.6,447.5 L68.8,447.5 L65.4,447.5 L62.3,447.5 L59.7,447.5 L57.5,447.5 L55.8,447.5 L54.6,447.5 L53.8,447.5 L53.6,447.5"/>
<path d="M182.6,436.2 L182.4,436.2 L181.6,436.2 L180.4,436.2 L178.8,436.2 L176.6,436.2 L174.0,436.2 L171.0,436.2 L167.6,436.2 L163.9,436.2 L159.7,436.2 L155.3,436.2 L150.6,436.2 L145.7,436.2 L140.5,436.2 L135.2,436.2 L129.7,436.2 L124.2,436.2 L118.6,436.2 L113.0,436.2 L107.5,436.2 L102.0,436.2 L96.7,436.2 L91.5,436.2 L86.6,436.2 L81.9,436.2 L77.5,436.2 L73.3,436.2 L69.6,436.2 L66.2,436.2 L63.2,436.2 L60.6,436.2 L58.4,436.2 L56.8,436.2 L55.6,436.2 L54.8,436.2"/>
<path d="M179.7,425.3 L179.4,425.3 L178.8,425.3 L177.6,425.3 L176.0,425.3 L174.0,425.3 L171.5,425.3 L168.6,425.3 L165.4,425.3 L161.8,425.3 L157.9,425.3 L153.6,425.3 L149.1,425.3 L144.4,425.3 L139.5,425.3 L134.4,425.3 L129.2,425.3 L123.9,425.3 L118.6,425.3 L113.3,425.3 L108.0,425.3 L102.8,425.3 L97.7,425.3 L92.8,425.3 L88.1,425.3 L83.6,425.3 L79.3,425.3 L75.4,425.3 L71.8,425.3 L68.6,425.3 L65.7,425.3 L63.2,425.3 L61.2,425.3 L59.6,425.3 L58.4,425.3 L57.8,425.3"/>
<path d="M174.9,415.0 L174.7,415.0 L174.0,415.0 L173.0,415.0 L171.5,415.0 L169.6,415.0 L167.3,415.0 L164.7,415.0 L161.7,415.0 L158.4,415.0 L154.8,415.0 L150.9,415.0 L146.7,415.0 L142.4,415.0 L137.9,415.0 L133.2,415.0 L128.4,415.0 L123.5,415.0 L118.6,415.0 L113.7,415.0 L108.8,415.0 L104.0,415.0 L99.3,415.0 L94.8,415.0 L90.5,415.0 L86.3,415.0 L82.4,415.0 L78.8,415.0 L75.5,415.0 L72.5,415.0 L69.9,415.0 L67.6,415.0 L65.7,415.0 L64.2,415.0 L63.2,415.0 L62.5,415.0"/>
<path d="M168.4,405.7 L168.2,405.7 L167.6,405.7 L166.7,405.7 L165.4,405.7 L163.7,405.7 L161.7,405.7 L159.4,405.7 L156.7,405.7 L153.8,405.7 L150.6,405.7 L147.2,405.7 L143.5,405.7 L139.6,405.7 L135.6,405.7 L131.5,405.7 L127.2,405.7 L122.9,405.7 L118.6,405.7 L114.3,405.7 L110.0,405.7 L105.7,405.7 L101.6,405.7 L97.6,405.7 L93.7,405.7 L90.0,405.7 L86.6,405.7 L83.4,405.7 L80.5,405.7 L77.8,405.7 L75.5,405.7 L73.5,405.7 L71.8,405.7 L70.5,405.7 L69.6,405.7 L69.0,405.7"/>
<path d="M160.4,397.7 L160.2,397.7 L159.7,397.7 L159.0,397.7 L157.9,397.7 L156.5,397.7 L154.8,397.7 L152.8,397.7 L150.6,397.7 L148.1,397.7 L145.5,397.7 L142.6,397.7 L139.5,397.7 L136.3,397.7 L132.9,397.7 L129.4,397.7 L125.9,397.7 L122.2,397.7 L118.6,397.7 L115.0,397.7 L111.3,397.7 L107.8,397.7 L104.3,397.7 L100.9,397.7 L97.7,397.7 L94.6,397.7 L91.7,397.7 L89.1,397.7 L86.6,397.7 L84.4,397.7 L82.4,397.7 L80.7,397.7 L79.3,397.7 L78.2,397.7 L77.5,397.7 L77.0,397.7"/>
<path d="M151.1,391.2 L151.0,391.2 L150.6,391.2 L150.0,391.2 L149.1,391.2 L148.1,391.2 L146.7,391.2 L145.2,391.2 L143.5,391.2 L141.6,391.2 L139.5,391.2 L137.2,391.2 L134.8,391.2 L132.3,391.2 L129.7,391.2 L127.0,391.2 L124.2,391.2 L121.4,391.2 L118.6,391.2 L115.8,391.2 L113.0,391.2 L110.2,391.2 L107.5,391.2 L104.9,391.2 L102.3,391.2 L100.0,391.2 L97.7,391.2 L95.6,391.2 L93.7,391.2 L92.0,391.2 L90.5,391.2 L89.1,391.2 L88.1,391.2 L87.2,391.2 L86.6,391.2 L86.2,391.2"/>
<path d="M140.8,386.4 L140.7,386.4 L140.5,386.4 L140.1,386.4 L139.5,386.4 L138.7,386.4 L137.9,386.4 L136.8,386.4 L135.6,386.4 L134.3,386.4 L132.9,386.4 L131.4,386.4 L129.7,386.4 L128.0,386.4 L126.2,386.4 L124.4,386.4 L122.5,386.4 L120.5,386.4 L118.6,386.4 L116.7,386.4 L114.7,386.4 L112.8,386.4 L111.0,386.4 L109.2,386.4 L107.5,386.4 L105.8,386.4 L104.3,386.4 L102.9,386.4 L101.6,386.4 L100.4,386.4 L99.3,386.4 L98.5,386.4 L97.7,386.4 L97.1,386.4 L96.7,386.4 L96.5,386.4"/>
<path d="M129.9,383.5 L129.8,383.5 L129.7,383.5 L129.5,383.5 L129.2,383.5 L128.8,383.5 L128.4,383.5 L127.8,383.5 L127.2,383.5 L126.6,383.5 L125.9,383.5 L125.1,383.5 L124.2,383.5 L123.4,383.5 L122.5,383.5 L121.5,383.5 L120.6,383.5 L119.6,383.5 L118.6,383.5 L117.6,383.5 L116.6,383.5 L115.7,383.5 L114.7,383.5 L113.8,383.5 L113.0,383.5 L112.1,383.5 L111.3,383.5 L110.6,383.5 L110.0,383.5 L109.4,383.5 L108.8,383.5 L108.4,383.5 L108.0,383.5 L107.7,383.5 L107.5,383.5 L107.4,383.5"/>
<path d="M118.6,512.5 L124.2,512.3 L129.8,511.5 L135.4,510.3 L140.7,508.6 L146.0,506.4 L151.0,503.8 L155.7,500.7 L160.2,497.3 L164.4,493.5 L168.2,489.3 L171.6,484.8 L174.7,480.0 L177.3,475.0 L179.4,469.7 L181.1,464.3 L182.4,458.8 L183.1,453.2 L183.4,447.5 L183.1,441.8 L182.4,436.2 L181.1,430.7 L179.4,425.3 L177.3,420.0 L174.7,415.0 L171.6,410.2 L168.2,405.7 L164.4,401.5 L160.2,397.7 L155.7,394.3 L151.0,391.2 L146.0,388.6 L140.7,386.4 L135.4,384.7 L129.8,383.5 L124.2,382.7"/>
<path d="M118.6,512.5 L124.1,512.3 L129.5,511.5 L134.8,510.3 L140.1,508.6 L145.1,506.4 L150.0,503.8 L154.6,500.7 L159.0,497.3 L163.0,493.5 L166.7,489.3 L170.0,484.8 L173.0,480.0 L175.5,475.0 L177.6,469.7 L179.2,464.3 L180.4,458.8 L181.1,453.2 L181.4,447.5 L181.1,441.8 L180.4,436.2 L179.2,430.7 L177.6,425.3 L175.5,420.0 L173.0,415.0 L170.0,410.2 L166.7,405.7 L163.0,401.5 L159.0,397.7 L154.6,394.3 L150.0,391.2 L145.1,388.6 L140.1,386.4 L134.8,384.7 L129.5,383.5 L124.1,382.7"/>
<path d="M118.6,512.5 L123.7,512.3 L128.8,511.5 L133.8,510.3 L138.7,508.6 L143.5,506.4 L148.1,503.8 L152.4,500.7 L156.5,497.3 L160.3,493.5 L163.7,489.3 L166.9,484.8 L169.6,480.0 L172.0,475.0 L174.0,469.7 L175.5,464.3 L176.6,458.8 L177.3,453.2 L177.5,447.5 L177.3,441.8 L176.6,436.2 L175.5,430.7 L174.0,425.3 L172.0,420.0 L169.6,415.0 L166.9,410.2 L163.7,405.7 L160.3,401.5 L156.5,397.7 L152.4,394.3 L148.1,391.2 L143.5,388.6 L138.7,386.4 L133.8,384.7 L128.8,383.5 L123.7,382.7"/>
<path d="M118.6,512.5 L123.2,512.3 L127.8,511.5 L132.4,510.3 L136.8,508.6 L141.1,506.4 L145.2,503.8 L149.1,500.7 L152.8,497.3 L156.2,493.5 L159.4,489.3 L162.2,484.8 L164.7,480.0 L166.9,475.0 L168.6,469.7 L170.0,464.3 L171.0,458.8 L171.6,453.2 L171.8,447.5 L171.6,441.8 L171.0,436.2 L170.0,430.7 L168.6,425.3 L166.9,420.0 L164.7,415.0 L162.2,410.2 L159.4,405.7 L156.2,401.5 L152.8,397.7 L149.1,394.3 L145.2,391.2 L141.1,388.6 L136.8,386.4 L132.4,384.7 L127.8,383.5 L123.2,382.7"/>
<path d="M118.6,512.5 L122.6,512.3 L126.6,511.5 L130.5,510.3 L134.3,508.6 L138.0,506.4 L141.6,503.8 L145.0,500.7 L148.1,497.3 L151.1,493.5 L153.8,489.3 L156.2,484.8 L158.4,480.0 L160.3,475.0 L161.8,469.7 L163.0,464.3 L163.9,458.8 L164.4,453.2 L164.6,447.5 L164.4,441.8 L163.9,436.2 L163.0,430.7 L161.8,425.3 L160.3,420.0 L158.4,415.0 L156.2,410.2 L153.8,405.7 L151.1,401.5 L148.1,397.7 L145.0,394.3 L141.6,391.2 L138.0,388.6 L134.3,386.4 L130.5,384.7 L126.6,383.5 L122.6,382.7"/>
<path d="M118.6,512.5 L121.8,512.3 L125.1,511.5 L128.2,510.3 L131.4,508.6 L134.4,506.4 L137.2,503.8 L140.0,500.7 L142.6,497.3 L145.0,493.5 L147.2,489.3 L149.1,484.8 L150.9,480.0 L152.4,475.0 L153.6,469.7 L154.6,464.3 L155.3,458.8 L155.7,453.2 L155.9,447.5 L155.7,441.8 L155.3,436.2 L154.6,430.7 L153.6,425.3 L152.4,420.0 L150.9,415.0 L149.1,410.2 L147.2,405.7 L145.0,401.5 L142.6,397.7 L140.0,394.2 L137.2,391.2 L134.4,388.6 L131.4,386.4 L128.2,384.7 L125.1,383.5 L121.8,382.7"/>
<path d="M118.6,512.5 L121.0,512.3 L123.4,511.5 L125.7,510.3 L128.0,508.6 L130.2,506.4 L132.3,503.8 L134.4,500.7 L136.3,497.3 L138.0,493.5 L139.6,489.3 L141.1,484.8 L142.4,480.0 L143.5,475.0 L144.4,469.7 L145.1,464.3 L145.7,458.8 L146.0,453.2 L146.1,447.5 L146.0,441.8 L145.7,436.2 L145.1,430.7 L144.4,425.3 L143.5,420.0 L142.4,415.0 L141.1,410.2 L139.6,405.7 L138.0,401.5 L136.3,397.7 L134.4,394.2 L132.3,391.2 L130.2,388.6 L128.0,386.4 L125.7,384.7 L123.4,383.5 L121.0,382.7"/>
<path d="M118.6,512.5 L120.1,512.3 L121.5,511.5 L123.0,510.3 L124.4,508.6 L125.7,506.4 L127.0,503.8 L128.2,500.7 L129.4,497.3 L130.5,493.5 L131.5,489.3 L132.4,484.8 L133.2,480.0 L133.8,475.0 L134.4,469.7 L134.9,464.3 L135.2,458.8 L135.4,453.2 L135.4,447.5 L135.4,441.8 L135.2,436.2 L134.9,430.7 L134.4,425.3 L133.8,420.0 L133.2,415.0 L132.4,410.2 L131.5,405.7 L130.5,401.5 L129.4,397.7 L128.2,394.2 L127.0,391.2 L125.7,388.6 L124.4,386.4 L123.0,384.7 L121.5,383.5 L120.1,382.7"/>
<path d="M118.6,512.5 L119.1,512.3 L119.6,511.5 L120.1,510.3 L120.5,508.6 L121.0,506.4 L121.4,503.8 L121.8,500.7 L122.2,497.3 L122.6,493.5 L122.9,489.3 L123.2,484.8 L123.5,480.0 L123.7,475.0 L123.9,469.7 L124.1,464.3 L124.2,458.8 L124.2,453.2 L124.3,447.5 L124.2,441.8 L124.2,436.2 L124.1,430.7 L123.9,425.3 L123.7,420.0 L123.5,415.0 L123.2,410.2 L122.9,405.7 L122.6,401.5 L122.2,397.7 L121.8,394.2 L121.4,391.2 L121.0,388.6 L120.5,386.4 L120.1,384.7 L119.6,383.5 L119.1,382.7"/>
<path d="M118.6,512.5 L118.1,512.3 L117.6,511.5 L117.1,510.3 L116.7,508.6 L116.2,506.4 L115.8,503.8 L115.4,500.7 L115.0,497.3 L114.6,493.5 L114.3,489.3 L114.0,484.8 L113.7,480.0 L113.5,475.0 L113.3,469.7 L113.1,464.3 L113.0,458.8 L113.0,453.2 L112.9,447.5 L113.0,441.8 L113.0,436.2 L113.1,430.7 L113.3,425.3 L113.5,420.0 L113.7,415.0 L114.0,410.2 L114.3,405.7 L114.6,401.5 L115.0,397.7 L115.4,394.2 L115.8,391.2 L116.2,388.6 L116.7,386.4 L117.1,384.7 L117.6,383.5 L118.1,382.7"/>
<path d="M118.6,512.5 L117.1,512.3 L115.7,511.5 L114.2,510.3 L112.8,508.6 L111.5,506.4 L110.2,503.8 L109.0,500.7 L107.8,497.3 L106.7,493.5 L105.7,489.3 L104.8,484.8 L104.0,480.0 L103.4,475.0 L102.8,469.7 L102.3,464.3 L102.0,458.8 L101.8,453.2 L101.8,447.5 L101.8,441.8 L102.0,436.2 L102.3,430.7 L102.8,425.3 L103.4,420.0 L104.0,415.0 L104.8,410.2 L105.7,405.7 L106.7,401.5 L107.8,397.7 L109.0,394.2 L110.2,391.2 L111.5,388.6 L112.8,386.4 L114.2,384.7 L115.7,383.5 L117.1,382.7"/>
<path d="M118.6,512.5 L116.2,512.3 L113.8,511.5 L111.5,510.3 L109.2,508.6 L107.0,506.4 L104.9,503.8 L102.8,500.7 L100.9,497.3 L99.2,493.5 L97.6,489.3 L96.1,484.8 L94.8,480.0 L93.7,475.0 L92.8,469.7 L92.1,464.3 L91.5,458.8 L91.2,453.2 L91.1,447.5 L91.2,441.8 L91.5,436.2 L92.1,430.7 L92.8,425.3 L93.7,420.0 L94.8,415.0 L96.1,410.2 L97.6,405.7 L99.2,401.5 L100.9,397.7 L102.8,394.2 L104.9,391.2 L107.0,388.6 L109.2,386.4 L111.5,384.7 L113.8,383.5 L116.2,382.7"/>
<path d="M118.6,512.5 L115.4,512.3 L112.1,511.5 L109.0,510.3 L105.8,508.6 L102.8,506.4 L100.0,503.8 L97.2,500.7 L94.6,497.3 L92.2,493.5 L90.0,489.3 L88.1,484.8 L86.3,480.0 L84.8,475.0 L83.6,469.7 L82.6,464.3 L81.9,458.8 L81.5,453.2 L81.3,447.5 L81.5,441.8 L81.9,436.2 L82.6,430.7 L83.6,425.3 L84.8,420.0 L86.3,415.0 L88.1,410.2 L90.0,405.7 L92.2,401.5 L94.6,397.7 L97.2,394.2 L100.0,391.2 L102.8,388.6 L105.8,386.4 L109.0,384.7 L112.1,383.5 L115.4,382.7"/>
<path d="M118.6,512.5 L114.6,512.3 L110.6,511.5 L106.7,510.3 L102.9,508.6 L99.2,506.4 L95.6,503.8 L92.2,500.7 L89.1,497.3 L86.1,493.5 L83.4,489.3 L81.0,484.8 L78.8,480.0 L76.9,475.0 L75.4,469.7 L74.2,464.3 L73.3,458.8 L72.8,453.2 L72.6,447.5 L72.8,441.8 L73.3,436.2 L74.2,430.7 L75.4,425.3 L76.9,420.0 L78.8,415.0 L81.0,410.2 L83.4,405.7 L86.1,401.5 L89.1,397.7 L92.2,394.3 L95.6,391.2 L99.2,388.6 L102.9,386.4 L106.7,384.7 L110.6,383.5 L114.6,382.7"/>
<path d="M118.6,512.5 L114.0,512.3 L109.4,511.5 L104.8,510.3 L100.4,508.6 L96.1,506.4 L92.0,503.8 L88.1,500.7 L84.4,497.3 L81.0,493.5 L77.8,489.3 L75.0,484.8 L72.5,480.0 L70.3,475.0 L68.6,469.7 L67.2,464.3 L66.2,458.8 L65.6,453.2 L65.4,447.5 L65.6,441.8 L66.2,436.2 L67.2,430.7 L68.6,425.3 L70.3,420.0 L72.5,415.0 L75.0,410.2 L77.8,405.7 L81.0,401.5 L84.4,397.7 L88.1,394.3 L92.0,391.2 L96.1,388.6 L100.4,386.4 L104.8,384.7 L109.4,383.5 L114.0,382.7"/>
<path d="M118.6,512.5 L113.5,512.3 L108.4,511.5 L103.4,510.3 L98.5,508.6 L93.7,506.4 L89.1,503.8 L84.8,500.7 L80.7,497.3 L76.9,493.5 L73.5,489.3 L70.3,484.8 L67.6,480.0 L65.2,475.0 L63.2,469.7 L61.7,464.3 L60.6,458.8 L59.9,453.2 L59.7,447.5 L59.9,441.8 L60.6,436.2 L61.7,430.7 L63.2,425.3 L65.2,420.0 L67.6,415.0 L70.3,410.2 L73.5,405.7 L76.9,401.5 L80.7,397.7 L84.8,394.3 L89.1,391.2 L93.7,388.6 L98.5,386.4 L103.4,384.7 L108.4,383.5 L113.5,382.7"/>
<path d="M118.6,512.5 L113.1,512.3 L107.7,511.5 L102.3,510.3 L97.1,508.6 L92.1,506.4 L87.2,503.8 L82.6,500.7 L78.2,497.3 L74.2,493.5 L70.5,489.3 L67.2,484.8 L64.2,480.0 L61.7,475.0 L59.6,469.7 L58.0,464.3 L56.8,458.8 L56.1,453.2 L55.8,447.5 L56.1,441.8 L56.8,436.2 L58.0,430.7 L59.6,425.3 L61.7,420.0 L64.2,415.0 L67.2,410.2 L70.5,405.7 L74.2,401.5 L78.2,397.7 L82.6,394.3 L87.2,391.2 L92.1,388.6 L97.1,386.4 L102.3,384.7 L107.7,383.5 L113.1,382.7"/>
<path d="M118.6,512.5 L113.0,512.3 L107.4,511.5 L101.8,510.3 L96.5,508.6 L91.2,506.4 L86.2,503.8 L81.5,500.7 L77.0,497.3 L72.8,493.5 L69.0,489.3 L65.6,484.8 L62.5,480.0 L59.9,475.0 L57.8,469.7 L56.1,464.3 L54.8,458.8 L54.1,453.2 L53.8,447.5 L54.1,441.8 L54.8,436.2 L56.1,430.7 L57.8,425.3 L59.9,420.0 L62.5,415.0 L65.6,410.2 L69.0,405.7 L72.8,401.5 L77.0,397.7 L81.5,394.3 L86.2,391.2 L91.2,388.6 L96.5,386.4 L101.8,384.7 L107.4,383.5 L113.0,382.7"/>
</g>
<g fill="none" stroke="rgb(120,210,210)" stroke-opacity="0.75" stroke-width="1">
<path d="M118.6,511.5 L119.6,511.5 L120.6,511.5 L121.5,511.5 L122.5,511.5 L123.4,511.5 L124.2,511.5 L125.1,511.5 L125.9,511.5 L126.6,511.5 L127.2,511.5 L127.8,511.5 L128.4,511.5 L128.8,511.5 L129.2,511.5 L129.5,511.5 L129.7,511.5 L129.8,511.5"/>
<path d="M107.3,511.5 L107.4,511.5 L107.5,511.5 L107.7,511.5 L108.0,511.5 L108.4,511.5 L108.8,511.5 L109.4,511.5 L110.0,511.5 L110.6,511.5 L111.3,511.5 L112.1,511.5 L113.0,511.5 L113.8,511.5 L114.7,511.5 L115.7,511.5 L116.6,511.5 L117.6,511.5 L118.6,511.5"/>
<path d="M118.6,508.6 L120.5,508.6 L122.5,508.6 L124.4,508.6 L126.2,508.6 L128.0,508.6 L129.7,508.6 L131.4,508.6 L132.9,508.6 L134.3,508.6 L135.6,508.6 L136.8,508.6 L137.9,508.6 L138.7,508.6 L139.5,508.6 L140.1,508.6 L140.5,508.6 L140.7,508.6"/>
<path d="M96.4,508.6 L96.5,508.6 L96.7,508.6 L97.1,508.6 L97.7,508.6 L98.5,508.6 L99.3,508.6 L100.4,508.6 L101.6,508.6 L102.9,508.6 L104.3,508.6 L105.8,508.6 L107.5,508.6 L109.2,508.6 L111.0,508.6 L112.8,508.6 L114.7,508.6 L116.7,508.6 L118.6,508.6"/>
<path d="M118.6,503.8 L121.4,503.8 L124.2,503.8 L127.0,503.8 L129.7,503.8 L132.3,503.8 L134.8,503.8 L137.2,503.8 L139.5,503.8 L141.6,503.8 L143.5,503.8 L145.2,503.8 L146.7,503.8 L148.1,503.8 L149.1,503.8 L150.0,503.8 L150.6,503.8 L151.0,503.8"/>
<path d="M86.1,503.8 L86.2,503.8 L86.6,503.8 L87.2,503.8 L88.1,503.8 L89.1,503.8 L90.5,503.8 L92.0,503.8 L93.7,503.8 L95.6,503.8 L97.7,503.8 L100.0,503.8 L102.3,503.8 L104.9,503.8 L107.5,503.8 L110.2,503.8 L113.0,503.8 L115.8,503.8 L118.6,503.8"/>
<path d="M118.6,497.3 L122.2,497.3 L125.9,497.3 L129.4,497.3 L132.9,497.3 L136.3,497.3 L139.5,497.3 L142.6,497.3 L145.5,497.3 L148.1,497.3 L150.6,497.3 L152.8,497.3 L154.8,497.3 L156.5,497.3 L157.9,497.3 L159.0,497.3 L159.7,497.3 L160.2,497.3"/>
<path d="M76.8,497.3 L77.0,497.3 L77.5,497.3 L78.2,497.3 L79.3,497.3 L80.7,497.3 L82.4,497.3 L84.4,497.3 L86.6,497.3 L89.1,497.3 L91.7,497.3 L94.6,497.3 L97.7,497.3 L100.9,497.3 L104.3,497.3 L107.8,497.3 L111.3,497.3 L115.0,497.3 L118.6,497.3"/>
<path d="M118.6,489.3 L122.9,489.3 L127.2,489.3 L131.5,489.3 L135.6,489.3 L139.6,489.3 L143.5,489.3 L147.2,489.3 L150.6,489.3 L153.8,489.3 L156.7,489.3 L159.4,489.3 L161.7,489.3 L163.7,489.3 L165.4,489.3 L166.7,489.3 L167.6,489.3 L168.2,489.3"/>
<path d="M68.8,489.3 L69.0,489.3 L69.6,489.3 L70.5,489.3 L71.8,489.3 L73.5,489.3 L75.5,489.3 L77.8,489.3 L80.5,489.3 L83.4,489.3 L86.6,489.3 L90.0,489.3 L93.7,489.3 L97.6,489.3 L101.6,489.3 L105.7,489.3 L110.0,489.3 L114.3,489.3 L118.6,489.3"/>
<path d="M118.6,480.0 L123.5,480.0 L128.4,480.0 L133.2,480.0 L137.9,480.0 L142.4,480.0 L146.7,480.0 L150.9,480.0 L154.8,480.0 L158.4,480.0 L161.7,480.0 L164.7,480.0 L167.3,480.0 L169.6,480.0 L171.5,480.0 L173.0,480.0 L174.0,480.0 L174.7,480.0"/>
<path d="M62.3,480.0 L62.5,480.0 L63.2,480.0 L64.2,480.0 L65.7,480.0 L67.6,480.0 L69.8,480.0 L72.5,480.0 L75.5,480.0 L78.8,480.0 L82.4,480.0 L86.3,480.0 L90.5,480.0 L94.8,480.0 L99.3,480.0 L104.0,480.0 L108.8,480.0 L113.7,480.0 L118.6,480.0"/>
<path d="M118.6,469.7 L123.9,469.7 L129.2,469.7 L134.4,469.7 L139.5,469.7 L144.4,469.7 L149.1,469.7 L153.6,469.7 L157.9,469.7 L161.8,469.7 L165.4,469.7 L168.6,469.7 L171.5,469.7 L174.0,469.7 L176.0,469.7 L177.6,469.7 L178.8,469.7 L179.4,469.7"/>
<path d="M57.5,469.7 L57.8,469.7 L58.4,469.7 L59.6,469.7 L61.2,469.7 L63.2,469.7 L65.7,469.7 L68.6,469.7 L71.8,469.7 L75.4,469.7 L79.3,469.7 L83.6,469.7 L88.1,469.7 L92.8,469.7 L97.7,469.7 L102.8,469.7 L108.0,469.7 L113.3,469.7 L118.6,469.7"/>
<path d="M118.6,458.8 L124.2,458.8 L129.7,458.8 L135.2,458.8 L140.5,458.8 L145.7,458.8 L150.6,458.8 L155.3,458.8 L159.7,458.8 L163.9,458.8 L167.6,458.8 L171.0,458.8 L174.0,458.8 L176.6,458.8 L178.8,458.8 L180.4,458.8 L181.6,458.8 L182.4,458.8"/>
<path d="M54.6,458.8 L54.8,458.8 L55.6,458.8 L56.8,458.8 L58.4,458.8 L60.6,458.8 L63.2,458.8 L66.2,458.8 L69.6,458.8 L73.3,458.8 L77.5,458.8 L81.9,458.8 L86.6,458.8 L91.5,458.8 L96.7,458.8 L102.0,458.8 L107.5,458.8 L113.0,458.8 L118.6,458.8"/>
<path d="M118.6,447.5 L124.3,447.5 L129.9,447.5 L135.4,447.5 L140.8,447.5 L146.1,447.5 L151.1,447.5 L155.9,447.5 L160.4,447.5 L164.6,447.5 L168.4,447.5 L171.8,447.5 L174.9,447.5 L177.5,447.5 L179.7,447.5 L181.4,447.5 L182.6,447.5 L183.4,447.5 L183.6,447.5"/>
<path d="M53.6,447.5 L53.8,447.5 L54.6,447.5 L55.8,447.5 L57.5,447.5 L59.7,447.5 L62.3,447.5 L65.4,447.5 L68.8,447.5 L72.6,447.5 L76.8,447.5 L81.3,447.5 L86.1,447.5 L91.1,447.5 L96.4,447.5 L101.8,447.5 L107.3,447.5 L112.9,447.5 L118.6,447.5"/>
<path d="M118.6,436.2 L124.2,436.2 L129.7,436.2 L135.2,436.2 L140.5,436.2 L145.7,436.2 L150.6,436.2 L155.3,436.2 L159.7,436.2 L163.9,436.2 L167.6,436.2 L171.0,436.2 L174.0,436.2 L176.6,436.2 L178.8,436.2 L180.4,436.2 L181.6,436.2 L182.4,436.2 L182.6,436.2"/>
<path d="M54.8,436.2 L54.6,436.2 L54.8,436.2 L55.6,436.2 L56.8,436.2 L58.4,436.2 L60.6,436.2 L63.2,436.2 L66.2,436.2 L69.6,436.2 L73.3,436.2 L77.5,436.2 L81.9,436.2 L86.6,436.2 L91.5,436.2 L96.7,436.2 L102.0,436.2 L107.5,436.2 L113.0,436.2 L118.6,436.2"/>
<path d="M118.6,425.3 L123.9,425.3 L129.2,425.3 L134.4,425.3 L139.5,425.3 L144.4,425.3 L149.1,425.3 L153.6,425.3 L157.9,425.3 L161.8,425.3 L165.4,425.3 L168.6,425.3 L171.5,425.3 L174.0,425.3 L176.0,425.3 L177.6,425.3 L178.8,425.3 L179.4,425.3 L179.7,425.3"/>
<path d="M57.8,425.3 L57.5,425.3 L57.8,425.3 L58.4,425.3 L59.6,425.3 L61.2,425.3 L63.2,425.3 L65.7,425.3 L68.6,425.3 L71.8,425.3 L75.4,425.3 L79.3,425.3 L83.6,425.3 L88.1,425.3 L92.8,425.3 L97.7,425.3 L102.8,425.3 L108.0,425.3 L113.3,425.3 L118.6,425.3"/>
<path d="M118.6,415.0 L123.5,415.0 L128.4,415.0 L133.2,415.0 L137.9,415.0 L142.4,415.0 L146.7,415.0 L150.9,415.0 L154.8,415.0 L158.4,415.0 L161.7,415.0 L164.7,415.0 L167.3,415.0 L169.6,415.0 L171.5,415.0 L173.0,415.0 L174.0,415.0 L174.7,415.0 L174.9,415.0"/>
<path d="M62.5,415.0 L62.3,415.0 L62.5,415.0 L63.2,415.0 L64.2,415.0 L65.7,415.0 L67.6,415.0 L69.8,415.0 L72.5,415.0 L75.5,415.0 L78.8,415.0 L82.4,415.0 L86.3,415.0 L90.5,415.0 L94.8,415.0 L99.3,415.0 L104.0,415.0 L108.8,415.0 L113.7,415.0 L118.6,415.0"/>
<path d="M118.6,405.7 L122.9,405.7 L127.2,405.7 L131.5,405.7 L135.6,405.7 L139.6,405.7 L143.5,405.7 L147.2,405.7 L150.6,405.7 L153.8,405.7 L156.7,405.7 L159.4,405.7 L161.7,405.7 L163.7,405.7 L165.4,405.7 L166.7,405.7 L167.6,405.7 L168.2,405.7 L168.4,405.7"/>
<path d="M69.0,405.7 L68.8,405.7 L69.0,405.7 L69.6,405.7 L70.5,405.7 L71.8,405.7 L73.5,405.7 L75.5,405.7 L77.8,405.7 L80.5,405.7 L83.4,405.7 L86.6,405.7 L90.0,405.7 L93.7,405.7 L97.6,405.7 L101.6,405.7 L105.7,405.7 L110.0,405.7 L114.3,405.7 L118.6,405.7"/>
<path d="M118.6,397.7 L122.2,397.7 L125.9,397.7 L129.4,397.7 L132.9,397.7 L136.3,397.7 L139.5,397.7 L142.6,397.7 L145.5,397.7 L148.1,397.7 L150.6,397.7 L152.8,397.7 L154.8,397.7 L156.5,397.7 L157.9,397.7 L159.0,397.7 L159.7,397.7 L160.2,397.7 L160.4,397.7"/>
<path d="M77.0,397.7 L76.8,397.7 L77.0,397.7 L77.5,397.7 L78.2,397.7 L79.3,397.7 L80.7,397.7 L82.4,397.7 L84.4,397.7 L86.6,397.7 L89.1,397.7 L91.7,397.7 L94.6,397.7 L97.7,397.7 L100.9,397.7 L104.3,397.7 L107.8,397.7 L111.3,397.7 L115.0,397.7 L118.6,397.7"/>
<path d="M118.6,391.2 L121.4,391.2 L124.2,391.2 L127.0,391.2 L129.7,391.2 L132.3,391.2 L134.8,391.2 L137.2,391.2 L139.5,391.2 L141.6,391.2 L143.5,391.2 L145.2,391.2 L146.7,391.2 L148.1,391.2 L149.1,391.2 L150.0,391.2 L150.6,391.2 L151.0,391.2 L151.1,391.2"/>
<path d="M86.2,391.2 L86.1,391.2 L86.2,391.2 L86.6,391.2 L87.2,391.2 L88.1,391.2 L89.1,391.2 L90.5,391.2 L92.0,391.2 L93.7,391.2 L95.6,391.2 L97.7,391.2 L100.0,391.2 L102.3,391.2 L104.9,391.2 L107.5,391.2 L110.2,391.2 L113.0,391.2 L115.8,391.2 L118.6,391.2"/>
<path d="M118.6,386.4 L120.5,386.4 L122.5,386.4 L124.4,386.4 L126.2,386.4 L128.0,386.4 L129.7,386.4 L131.4,386.4 L132.9,386.4 L134.3,386.4 L135.6,386.4 L136.8,386.4 L137.9,386.4 L138.7,386.4 L139.5,386.4 L140.1,386.4 L140.5,386.4 L140.7,386.4 L140.8,386.4"/>
<path d="M96.5,386.4 L96.4,386.4 L96.5,386.4 L96.7,386.4 L97.1,386.4 L97.7,386.4 L98.5,386.4 L99.3,386.4 L100.4,386.4 L101.6,386.4 L102.9,386.4 L104.3,386.4 L105.8,386.4 L107.5,386.4 L109.2,386.4 L111.0,386.4 L112.8,386.4 L114.7,386.4 L116.7,386.4 L118.6,386.4"/>
<path d="M118.6,383.5 L119.6,383.5 L120.6,383.5 L121.5,383.5 L122.5,383.5 L123.4,383.5 L124.2,383.5 L125.1,383.5 L125.9,383.5 L126.6,383.5 L127.2,383.5 L127.8,383.5 L128.4,383.5 L128.8,383.5 L129.2,383.5 L129.5,383.5 L129.7,383.5 L129.8,383.5 L129.9,383.5"/>
<path d="M107.4,383.5 L107.3,383.5 L107.4,383.5 L107.5,383.5 L107.7,383.5 L108.0,383.5 L108.4,383.5 L108.8,383.5 L109.4,383.5 L110.0,383.5 L110.6,383.5 L111.3,383.5 L112.1,383.5 L113.0,383.5 L113.8,383.5 L114.7,383.5 L115.7,383.5 L116.6,383.5 L117.6,383.5 L118.6,383.5"/>
<path d="M118.6,512.5 L119.1,512.3 L119.6,511.5 L120.1,510.3 L120.5,508.6 L121.0,506.4 L121.4,503.8 L121.8,500.8 L122.2,497.3 L122.6,493.5 L122.9,489.3 L123.2,484.8 L123.5,480.0 L123.7,475.0 L123.9,469.7 L124.1,464.3 L124.2,458.8 L124.2,453.2 L124.3,447.5 L124.2,441.8 L124.2,436.2 L124.1,430.7 L123.9,425.3 L123.7,420.0 L123.5,415.0 L123.2,410.2 L122.9,405.7 L122.6,401.5 L122.2,397.7 L121.8,394.3 L121.4,391.2 L121.0,388.6 L120.5,386.4 L120.1,384.7 L119.6,383.5 L119.1,382.7 L118.6,382.5"/>
<path d="M118.6,512.5 L120.1,512.3 L121.5,511.5 L123.0,510.3 L124.4,508.6 L125.7,506.4 L127.0,503.8 L128.2,500.8 L129.4,497.3 L130.5,493.5 L131.5,489.3 L132.4,484.8 L133.2,480.0 L133.8,475.0 L134.4,469.7 L134.8,464.3 L135.2,458.8 L135.4,453.2 L135.4,447.5 L135.4,441.8 L135.2,436.2 L134.8,430.7 L134.4,425.3 L133.8,420.0 L133.2,415.0 L132.4,410.2 L131.5,405.7 L130.5,401.5 L129.4,397.7 L128.2,394.3 L127.0,391.2 L125.7,388.6 L124.4,386.4 L123.0,384.7 L121.5,383.5 L120.1,382.7 L118.6,382.5"/>
<path d="M118.6,512.5 L121.0,512.3 L123.4,511.5 L125.7,510.3 L128.0,508.6 L130.2,506.4 L132.3,503.8 L134.4,500.8 L136.3,497.3 L138.0,493.5 L139.6,489.3 L141.1,484.8 L142.4,480.0 L143.5,475.0 L144.4,469.7 L145.1,464.3 L145.7,458.8 L146.0,453.2 L146.1,447.5 L146.0,441.8 L145.7,436.2 L145.1,430.7 L144.4,425.3 L143.5,420.0 L142.4,415.0 L141.1,410.2 L139.6,405.7 L138.0,401.5 L136.3,397.7 L134.4,394.3 L132.3,391.2 L130.2,388.6 L128.0,386.4 L125.7,384.7 L123.4,383.5 L121.0,382.7 L118.6,382.5"/>
<path d="M118.6,512.5 L121.8,512.3 L125.1,511.5 L128.2,510.3 L131.4,508.6 L134.4,506.4 L137.2,503.8 L140.0,500.8 L142.6,497.3 L145.0,493.5 L147.2,489.3 L149.1,484.8 L150.9,480.0 L152.4,475.0 L153.6,469.7 L154.6,464.3 L155.3,458.8 L155.7,453.2 L155.9,447.5 L155.7,441.8 L155.3,436.2 L154.6,430.7 L153.6,425.3 L152.4,420.0 L150.9,415.0 L149.1,410.2 L147.2,405.7 L145.0,401.5 L142.6,397.7 L140.0,394.3 L137.2,391.2 L134.4,388.6 L131.4,386.4 L128.2,384.7 L125.1,383.5 L121.8,382.7 L118.6,382.5"/>
<path d="M118.6,512.5 L122.6,512.3 L126.6,511.5 L130.5,510.3 L134.3,508.6 L138.0,506.4 L141.6,503.8 L145.0,500.7 L148.1,497.3 L151.1,493.5 L153.8,489.3 L156.2,484.8 L158.4,480.0 L160.3,475.0 L161.8,469.7 L163.0,464.3 L163.9,458.8 L164.4,453.2 L164.6,447.5 L164.4,441.8 L163.9,436.2 L163.0,430.7 L161.8,425.3 L160.3,420.0 L158.4,415.0 L156.2,410.2 L153.8,405.7 L151.1,401.5 L148.1,397.7 L145.0,394.3 L141.6,391.2 L138.0,388.6 L134.3,386.4 L130.5,384.7 L126.6,383.5 L122.6,382.7 L118.6,382.5"/>
<path d="M118.6,512.5 L123.2,512.3 L127.8,511.5 L132.4,510.3 L136.8,508.6 L141.1,506.4 L145.2,503.8 L149.1,500.7 L152.8,497.3 L156.2,493.5 L159.4,489.3 L162.2,484.8 L164.7,480.0 L166.9,475.0 L168.6,469.7 L170.0,464.3 L171.0,458.8 L171.6,453.2 L171.8,447.5 L171.6,441.8 L171.0,436.2 L170.0,430.7 L168.6,425.3 L166.9,420.0 L164.7,415.0 L162.2,410.2 L159.4,405.7 L156.2,401.5 L152.8,397.7 L149.1,394.3 L145.2,391.2 L141.1,388.6 L136.8,386.4 L132.4,384.7 L127.8,383.5 L123.2,382.7 L118.6,382.5"/>
<path d="M118.6,512.5 L123.7,512.3 L128.8,511.5 L133.8,510.3 L138.7,508.6 L143.5,506.4 L148.1,503.8 L152.4,500.7 L156.5,497.3 L160.3,493.5 L163.7,489.3 L166.9,484.8 L169.6,480.0 L172.0,475.0 L174.0,469.7 L175.5,464.3 L176.6,458.8 L177.3,453.2 L177.5,447.5 L177.3,441.8 L176.6,436.2 L175.5,430.7 L174.0,425.3 L172.0,420.0 L169.6,415.0 L166.9,410.2 L163.7,405.7 L160.3,401.5 L156.5,397.7 L152.4,394.3 L148.1,391.2 L143.5,388.6 L138.7,386.4 L133.8,384.7 L128.8,383.5 L123.7,382.7 L118.6,382.5"/>
<path d="M118.6,512.5 L124.1,512.3 L129.5,511.5 L134.8,510.3 L140.1,508.6 L145.1,506.4 L150.0,503.8 L154.6,500.7 L159.0,497.3 L163.0,493.5 L166.7,489.3 L170.0,484.8 L173.0,480.0 L175.5,475.0 L177.6,469.7 L179.2,464.3 L180.4,458.8 L181.1,453.2 L181.4,447.5 L181.1,441.8 L180.4,436.2 L179.2,430.7 L177.6,425.3 L175.5,420.0 L173.0,415.0 L170.0,410.2 L166.7,405.7 L163.0,401.5 L159.0,397.7 L154.6,394.3 L150.0,391.2 L145.1,388.6 L140.1,386.4 L134.8,384.7 L129.5,383.5 L124.1,382.7 L118.6,382.5"/>
<path d="M118.6,512.5 L124.2,512.3 L129.8,511.5 L135.4,510.3 L140.7,508.6 L146.0,506.4 L151.0,503.8 L155.7,500.7 L160.2,497.3 L164.4,493.5 L168.2,489.3 L171.6,484.8 L174.7,480.0 L177.3,475.0 L179.4,469.7 L181.1,464.3 L182.4,458.8 L183.1,453.2 L183.4,447.5 L183.1,441.8 L182.4,436.2 L181.1,430.7 L179.4,425.3 L177.3,420.0 L174.7,415.0 L171.6,410.2 L168.2,405.7 L164.4,401.5 L160.2,397.7 L155.7,394.3 L151.0,391.2 L146.0,388.6 L140.7,386.4 L135.4,384.7 L129.8,383.5 L124.2,382.7 L118.6,382.5"/>
<path d="M124.2,382.7 L118.6,382.5"/>
<path d="M124.1,382.7 L118.6,382.5"/>
<path d="M123.7,382.7 L118.6,382.5"/>
<path d="M123.2,382.7 L118.6,382.5"/>
<path d="M122.6,382.7 L118.6,382.5"/>
<path d="M121.8,382.7 L118.6,382.5"/>
<path d="M121.0,382.7 L118.6,382.5"/>
<path d="M120.1,382.7 L118.6,382.5"/>
<path d="M119.1,382.7 L118.6,382.5"/>
<path d="M118.1,382.7 L118.6,382.5"/>
<path d="M117.1,382.7 L118.6,382.5"/>
<path d="M116.2,382.7 L118.6,382.5"/>
<path d="M115.4,382.7 L118.6,382.5"/>
<path d="M114.6,382.7 L118.6,382.5"/>
<path d="M114.0,382.7 L118.6,382.5"/>
<path d="M113.5,382.7 L118.6,382.5"/>
<path d="M113.1,382.7 L118.6,382.5"/>
<path d="M113.0,382.7 L118.6,382.5"/>
<path d="M118.6,512.5 L113.0,512.3 L107.4,511.5 L101.8,510.3 L96.5,508.6 L91.2,506.4 L86.2,503.8 L81.5,500.7 L77.0,497.3 L72.8,493.5 L69.0,489.3 L65.6,484.8 L62.5,480.0 L59.9,475.0 L57.8,469.7 L56.1,464.3 L54.8,458.8 L54.1,453.2 L53.8,447.5 L54.1,441.8 L54.8,436.2 L56.1,430.7 L57.8,425.3 L59.9,420.0 L62.5,415.0 L65.6,410.2 L69.0,405.7 L72.8,401.5 L77.0,397.7 L81.5,394.3 L86.2,391.2 L91.2,388.6 L96.5,386.4 L101.8,384.7 L107.4,383.5 L113.0,382.7 L118.6,382.5"/>
<path d="M118.6,512.5 L113.1,512.3 L107.7,511.5 L102.3,510.3 L97.1,508.6 L92.1,506.4 L87.2,503.8 L82.6,500.7 L78.2,497.3 L74.2,493.5 L70.5,489.3 L67.2,484.8 L64.2,480.0 L61.7,475.0 L59.6,469.7 L58.0,464.3 L56.8,458.8 L56.1,453.2 L55.8,447.5 L56.1,441.8 L56.8,436.2 L58.0,430.7 L59.6,425.3 L61.7,420.0 L64.2,415.0 L67.2,410.2 L70.5,405.7 L74.2,401.5 L78.2,397.7 L82.6,394.3 L87.2,391.2 L92.1,388.6 L97.1,386.4 L102.3,384.7 L107.7,383.5 L113.1,382.7 L118.6,382.5"/>
<path d="M118.6,512.5 L113.5,512.3 L108.4,511.5 L103.4,510.3 L98.5,508.6 L93.7,506.4 L89.1,503.8 L84.8,500.7 L80.7,497.3 L76.9,493.5 L73.5,489.3 L70.3,484.8 L67.6,480.0 L65.2,475.0 L63.2,469.7 L61.7,464.3 L60.6,458.8 L59.9,453.2 L59.7,447.5 L59.9,441.8 L60.6,436.2 L61.7,430.7 L63.2,425.3 L65.2,420.0 L67.6,415.0 L70.3,410.2 L73.5,405.7 L76.9,401.5 L80.7,397.7 L84.8,394.3 L89.1,391.2 L93.7,388.6 L98.5,386.4 L103.4,384.7 L108.4,383.5 L113.5,382.7 L118.6,382.5"/>
<path d="M118.6,512.5 L114.0,512.3 L109.4,511.5 L104.8,510.3 L100.4,508.6 L96.1,506.4 L92.0,503.8 L88.1,500.7 L84.4,497.3 L81.0,493.5 L77.8,489.3 L75.0,484.8 L72.5,480.0 L70.3,475.0 L68.6,469.7 L67.2,464.3 L66.2,458.8 L65.6,453.2 L65.4,447.5 L65.6,441.8 L66.2,436.2 L67.2,430.7 L68.6,425.3 L70.3,420.0 L72.5,415.0 L75.0,410.2 L77.8,405.7 L81.0,401.5 L84.4,397.7 L88.1,394.3 L92.0,391.2 L96.1,388.6 L100.4,386.4 L104.8,384.7 L109.4,383.5 L114.0,382.7 L118.6,382.5"/>
<path d="M118.6,512.5 L114.6,512.3 L110.6,511.5 L106.7,510.3 L102.9,508.6 L99.2,506.4 L95.6,503.8 L92.2,500.7 L89.1,497.3 L86.1,493.5 L83.4,489.3 L81.0,484.8 L78.8,480.0 L76.9,475.0 L75.4,469.7 L74.2,464.3 L73.3,458.8 L72.8,453.2 L72.6,447.5 L72.8,441.8 L73.3,436.2 L74.2,430.7 L75.4,425.3 L76.9,420.0 L78.8,415.0 L81.0,410.2 L83.4,405.7 L86.1,401.5 L89.1,397.7 L92.2,394.3 L95.6,391.2 L99.2,388.6 L102.9,386.4 L106.7,384.7 L110.6,383.5 L114.6,382.7 L118.6,382.5"/>
<path d="M118.6,512.5 L115.4,512.3 L112.1,511.5 L109.0,510.3 L105.8,508.6 L102.8,506.4 L100.0,503.8 L97.2,500.8 L94.6,497.3 L92.2,493.5 L90.0,489.3 L88.1,484.8 L86.3,480.0 L84.8,475.0 L83.6,469.7 L82.6,464.3 L81.9,458.8 L81.5,453.2 L81.3,447.5 L81.5,441.8 L81.9,436.2 L82.6,430.7 L83.6,425.3 L84.8,420.0 L86.3,415.0 L88.1,410.2 L90.0,405.7 L92.2,401.5 L94.6,397.7 L97.2,394.3 L100.0,391.2 L102.8,388.6 L105.8,386.4 L109.0,384.7 L112.1,383.5 L115.4,382.7 L118.6,382.5"/>
<path d="M118.6,512.5 L116.2,512.3 L113.8,511.5 L111.5,510.3 L109.2,508.6 L107.0,506.4 L104.9,503.8 L102.8,500.8 L100.9,497.3 L99.2,493.5 L97.6,489.3 L96.1,484.8 L94.8,480.0 L93.7,475.0 L92.8,469.7 L92.1,464.3 L91.5,458.8 L91.2,453.2 L91.1,447.5 L91.2,441.8 L91.5,436.2 L92.1,430.7 L92.8,425.3 L93.7,420.0 L94.8,415.0 L96.1,410.2 L97.6,405.7 L99.2,401.5 L100.9,397.7 L102.8,394.3 L104.9,391.2 L107.0,388.6 L109.2,386.4 L111.5,384.7 L113.8,383.5 L116.2,382.7 L118.6,382.5"/>
<path d="M118.6,512.5 L117.1,512.3 L115.7,511.5 L114.2,510.3 L112.8,508.6 L111.5,506.4 L110.2,503.8 L109.0,500.8 L107.8,497.3 L106.7,493.5 L105.7,489.3 L104.8,484.8 L104.0,480.0 L103.4,475.0 L102.8,469.7 L102.3,464.3 L102.0,458.8 L101.8,453.2 L101.8,447.5 L101.8,441.8 L102.0,436.2 L102.3,430.7 L102.8,425.3 L103.4,420.0 L104.0,415.0 L104.8,410.2 L105.7,405.7 L106.7,401.5 L107.8,397.7 L109.0,394.3 L110.2,391.2 L111.5,388.6 L112.8,386.4 L114.2,384.7 L115.7,383.5 L117.1,382.7 L118.6,382.5"/>
<path d="M118.6,512.5 L118.1,512.3 L117.6,511.5 L117.1,510.3 L116.7,508.6 L116.2,506.4 L115.8,503.8 L115.4,500.8 L115.0,497.3 L114.6,493.5 L114.3,489.3 L114.0,484.8 L113.7,480.0 L113.5,475.0 L113.3,469.7 L113.1,464.3 L113.0,458.8 L113.0,453.2 L112.9,447.5 L113.0,441.8 L113.0,436.2 L113.1,430.7 L113.3,425.3 L113.5,420.0 L113.7,415.0 L114.0,410.2 L114.3,405.7 L114.6,401.5 L115.0,397.7 L115.4,394.3 L115.8,391.2 L116.2,388.6 L116.7,386.4 L117.1,384.7 L117.6,383.5 L118.1,382.7 L118.6,382.5"/>
</g></g>
<g>
<polygon points="71.9,399.6 90,391.6 92,396 74,404" fill="#f4f6f6"/>
<polygon points="102.7,387.1 121,386 120.9,396.2 100,397" fill="#eef2f2"/>
<rect x="117.5" y="397.3" width="13.6" height="13.7" fill="#eef2f2"/>
<polygon points="147,390.5 150,389 168,402 165.5,404.2" fill="#e8ecec"/>
<rect x="56" y="434.9" width="7.9" height="12.6" fill="#f0f4f4"/>
<rect x="56" y="447.5" width="7.9" height="4.5" fill="#7a6e50"/>
<rect x="84.4" y="438.3" width="11.4" height="9.2" fill="#f0f4f4"/>
<rect x="84.4" y="447.5" width="11.4" height="9.1" fill="#7a6e50"/>
<rect x="98.1" y="432.6" width="17.1" height="14.9" fill="#f0f4f4"/>
<rect x="98.1" y="447.5" width="17.1" height="12.5" fill="#7a6e50"/>
<rect x="120.9" y="439.5" width="12.5" height="8.0" fill="#f0f4f4"/>
<rect x="120.9" y="447.5" width="12.5" height="9.5" fill="#7a6e50"/>
<rect x="158.5" y="434.9" width="12.5" height="12.6" fill="#f0f4f4"/>
<rect x="158.5" y="447.5" width="12.5" height="12.5" fill="#7a6e50"/>
<rect x="117.5" y="493" width="11.3" height="9" fill="#8a7260"/>
<rect x="106" y="506.7" width="13.7" height="5.7" fill="#8a7a60"/>
</g>
<path d="M53.7,447.5 H158.5" stroke="#e8dc00" stroke-width="3"/>
<path d="M158.5,447.5 H183.5" stroke="#99d000" stroke-width="3"/>
<path d="M108.3,396.2 Q106,420 106,444" stroke="#ff8a00" stroke-width="2.2" fill="none"/>
<path d="M105,460 Q106,485 110.6,504.4" stroke="#ffc800" stroke-width="2.2" fill="none"/>
<path d="M118.6,397.3 V504.4" stroke="#e8e8e8" stroke-width="1.2"/>
<path d="M126.6,395 C150,410 165,430 160.7,440 M161,458 C155,480 140,500 128.8,506.7" stroke="#e0d000" stroke-width="1.2" fill="none"/>
<path d="M169,458 C168,475 165,488 158.5,497.6" stroke="#ff9a00" stroke-width="1.2" fill="none"/>
<path d="M127,460 L124,495" stroke="#aadd00" stroke-width="1" fill="none"/>
<path d="M59,462 C62,482 78,502 104,511" stroke="#d8c800" stroke-width="1" stroke-dasharray="2 1.5" fill="none"/>
<path d="M61,432 C63,415 70,402 82,392" stroke="#88c000" stroke-width="1" stroke-dasharray="1.5 2" fill="none"/>
<path d="M92,424 L88,470 M137,415 L140,470" stroke="#e8e8e8" stroke-width="0.8" stroke-dasharray="3 2" fill="none"/>
<g fill="none" stroke="#cfcfcf" stroke-width="1">
<path d="M281,238.2 C282,210 284,193 291,187 C298,182 320,180 340,179.4 L702.7,179.4 C722,180.5 738,183 744.5,190.6 C750,198 752,215 753.3,234.3"/>
<path d="M513,234.7 C511,215 508,198 502,192 C496,186 486,183 475.8,181.8 C520,184 600,187 700,189 C800,191 900,195 945,195.2 C980,194 1000,190 1018.7,186 C1008,192 1001,205 997.8,234.7"/>
<path d="M415.4,176.2 L307,256"/>
<path d="M919.9,175.5 L1199.4,264.9"/>
<path d="M307.3,266.9 Q397,241.3 488.4,264.9"/>
<path d="M541.9,264.3 Q634.5,238.7 727.4,263.9"/>
<path d="M780.3,263.9 Q875,234.9 969.4,263.9"/>
<path d="M1023.9,263.9 Q1110,241.6 1199.4,264.9"/>
<path d="M306.5,296.3 C325,312 350,340 368.7,375.7"/>
<path d="M489.4,289.9 C470,305 440,335 414.6,373.7"/>
<path d="M279.3,318 L279.3,374.4"/>
<path d="M542.9,293.9 C560,308 585,338 605.7,373.3"/>
<path d="M521.9,314.8 L527.1,374"/>
<path d="M780.9,288.9 C797,302 830,335 851.7,368.7"/>
<path d="M1206.4,296.9 C1190,308 1165,335 1145.6,371.7"/>
<path d="M407.7,454.4 C420,490 460,545 513.4,575.6"/>
<path d="M299.6,596 L382.9,651.5"/>
<path d="M269,618 Q265,635 255,641.3"/>
<path d="M560.1,622.3 C575,632 600,640 665,644.2 S780,650 860,651"/>
<path d="M760.9,616.5 C765,632 772,643 793,646.3 L851.4,650"/>
<path d="M807.6,644.2 C890,645 955,643 974.6,616.5"/>
<path d="M860.3,448 C850,480 830,530 782.8,562.4"/>
<path d="M1105.5,452 C1090,485 1060,535 1017,562.4"/>
<path d="M1136.9,452 C1150,485 1175,535 1205.3,563.9"/>
<path d="M800,650.6 L1170,650.6 L1189,646 L1175,650"/>
</g>
<path d="M728.4,287.3 C710,300 670,335 649.6,373.3" fill="none" stroke="#ffb400" stroke-width="1.6"/>
<path d="M754,313.8 V371.7" fill="none" stroke="#ff8a00" stroke-width="4"/>
<path d="M993.9,314.8 V371.7" fill="none" stroke="#66dd00" stroke-width="1.6"/>
<path d="M969.4,289.9 C950,303 915,340 898.3,370" fill="none" stroke="#b8d000" stroke-width="1.3"/>
<path d="M306.4,414.5 H364.1" fill="none" stroke="#9acd00" stroke-width="1.6"/>
<path d="M417.5,414.2 H503.1" fill="none" stroke="#9acd00" stroke-width="1.6"/>
<path d="M557.2,413.4 H599.3" fill="none" stroke="#a2d800" stroke-width="3"/>
<path d="M653.3,412 H727.1" fill="none" stroke="#eadc00" stroke-width="4"/>
<path d="M780.5,411 H849.3" fill="none" stroke="#eadc00" stroke-width="4"/>
<path d="M902.3,410.8 H966" fill="none" stroke="#ffbe00" stroke-width="4"/>
<path d="M1019,411.9 H1096.9" fill="none" stroke="#c0dc00" stroke-width="2.1"/>
<path d="M1149.9,413 H1206.8" fill="none" stroke="#7ccc00" stroke-width="1.6"/>
<path d="M279.2,453.8 L276.9,537.5" fill="none" stroke="#c8dc00" stroke-width="1.6"/>
<path d="M299.6,589.6 C350,602 450,612 515.7,593.1" fill="none" stroke="#e6e600" stroke-width="1.6"/>
<path d="M532.1,453.6 L536.7,543.5" fill="none" stroke="#f0e000" stroke-width="1.6"/>
<path d="M616.3,453.2 C610,490 595,530 567.4,562.4" fill="none" stroke="#ff9e00" stroke-width="1.8"/>
<path d="M643.3,453 C655,490 690,535 729.5,563.9" fill="none" stroke="#f0e000" stroke-width="1.6"/>
<path d="M568.3,590.8 Q650,604 732.4,584.9" fill="none" stroke="#a8e000" stroke-width="1.6"/>
<path d="M784.3,585.8 Q870,606 963.9,583.8" fill="none" stroke="#a8e000" stroke-width="1.6"/>
<path d="M755,451.2 V537" fill="none" stroke="#ffcc00" stroke-width="4"/>
<path d="M890.3,449 C905,485 935,530 963.9,559.5" fill="none" stroke="#ffae00" stroke-width="1.6"/>
<path d="M992,451.3 L991.5,535.3" fill="none" stroke="#e8e800" stroke-width="1.6"/>
<path d="M1017,584.3 Q1106,608 1199.5,585.8" fill="none" stroke="#e8e800" stroke-width="1.6"/>
<path d="M952,652 L1199.5,584.9" fill="none" stroke="#e8e800" stroke-width="1.5"/>
<g stroke="rgb(80,228,228)" stroke-opacity="0.9" stroke-width="1.25">
<path d="M266.80,179 V650"/>
<path d="M290.54,179 V650"/>
<path d="M314.27,179 V650"/>
<path d="M338.01,179 V650"/>
<path d="M361.75,179 V650"/>
<path d="M385.49,179 V650"/>
<path d="M409.22,179 V650"/>
<path d="M432.96,179 V650"/>
<path d="M456.70,179 V650"/>
<path d="M480.43,179 V650"/>
<path d="M504.17,179 V650"/>
<path d="M527.91,179 V650"/>
<path d="M551.64,179 V650"/>
<path d="M575.38,179 V650"/>
<path d="M599.12,179 V650"/>
<path d="M622.86,179 V650"/>
<path d="M646.59,179 V650"/>
<path d="M670.33,179 V650"/>
<path d="M694.07,179 V650"/>
<path d="M717.80,179 V650"/>
<path d="M741.54,179 V650"/>
<path d="M765.28,179 V650"/>
<path d="M789.01,179 V650"/>
<path d="M812.75,179 V650"/>
<path d="M836.49,179 V650"/>
<path d="M860.22,179 V650"/>
<path d="M883.96,179 V650"/>
<path d="M907.70,179 V650"/>
<path d="M931.44,179 V650"/>
<path d="M955.17,179 V650"/>
<path d="M978.91,179 V650"/>
<path d="M1002.65,179 V650"/>
<path d="M1026.38,179 V650"/>
<path d="M1050.12,179 V650"/>
<path d="M1073.86,179 V650"/>
<path d="M1097.60,179 V650"/>
<path d="M1121.33,179 V650"/>
<path d="M1145.07,179 V650"/>
<path d="M1168.81,179 V650"/>
<path d="M1192.54,179 V650"/>
</g>
<g stroke="rgb(85,210,210)" stroke-opacity="0.85" stroke-width="1.35">
<path d="M255,189.80 H1205"/>
<path d="M255,213.32 H1205"/>
<path d="M255,236.84 H1205"/>
<path d="M255,260.36 H1205"/>
<path d="M255,283.88 H1205"/>
<path d="M255,307.40 H1205"/>
<path d="M255,330.92 H1205"/>
<path d="M255,354.44 H1205"/>
<path d="M255,377.96 H1205"/>
<path d="M255,401.48 H1205"/>
<path d="M255,425.00 H1205"/>
<path d="M255,448.52 H1205"/>
<path d="M255,472.04 H1205"/>
<path d="M255,495.56 H1205"/>
<path d="M255,519.08 H1205"/>
<path d="M255,542.60 H1205"/>
<path d="M255,566.12 H1205"/>
<path d="M255,589.64 H1205"/>
<path d="M255,613.16 H1205"/>
<path d="M255,636.68 H1205"/>
</g>
</svg>
</body></html>
